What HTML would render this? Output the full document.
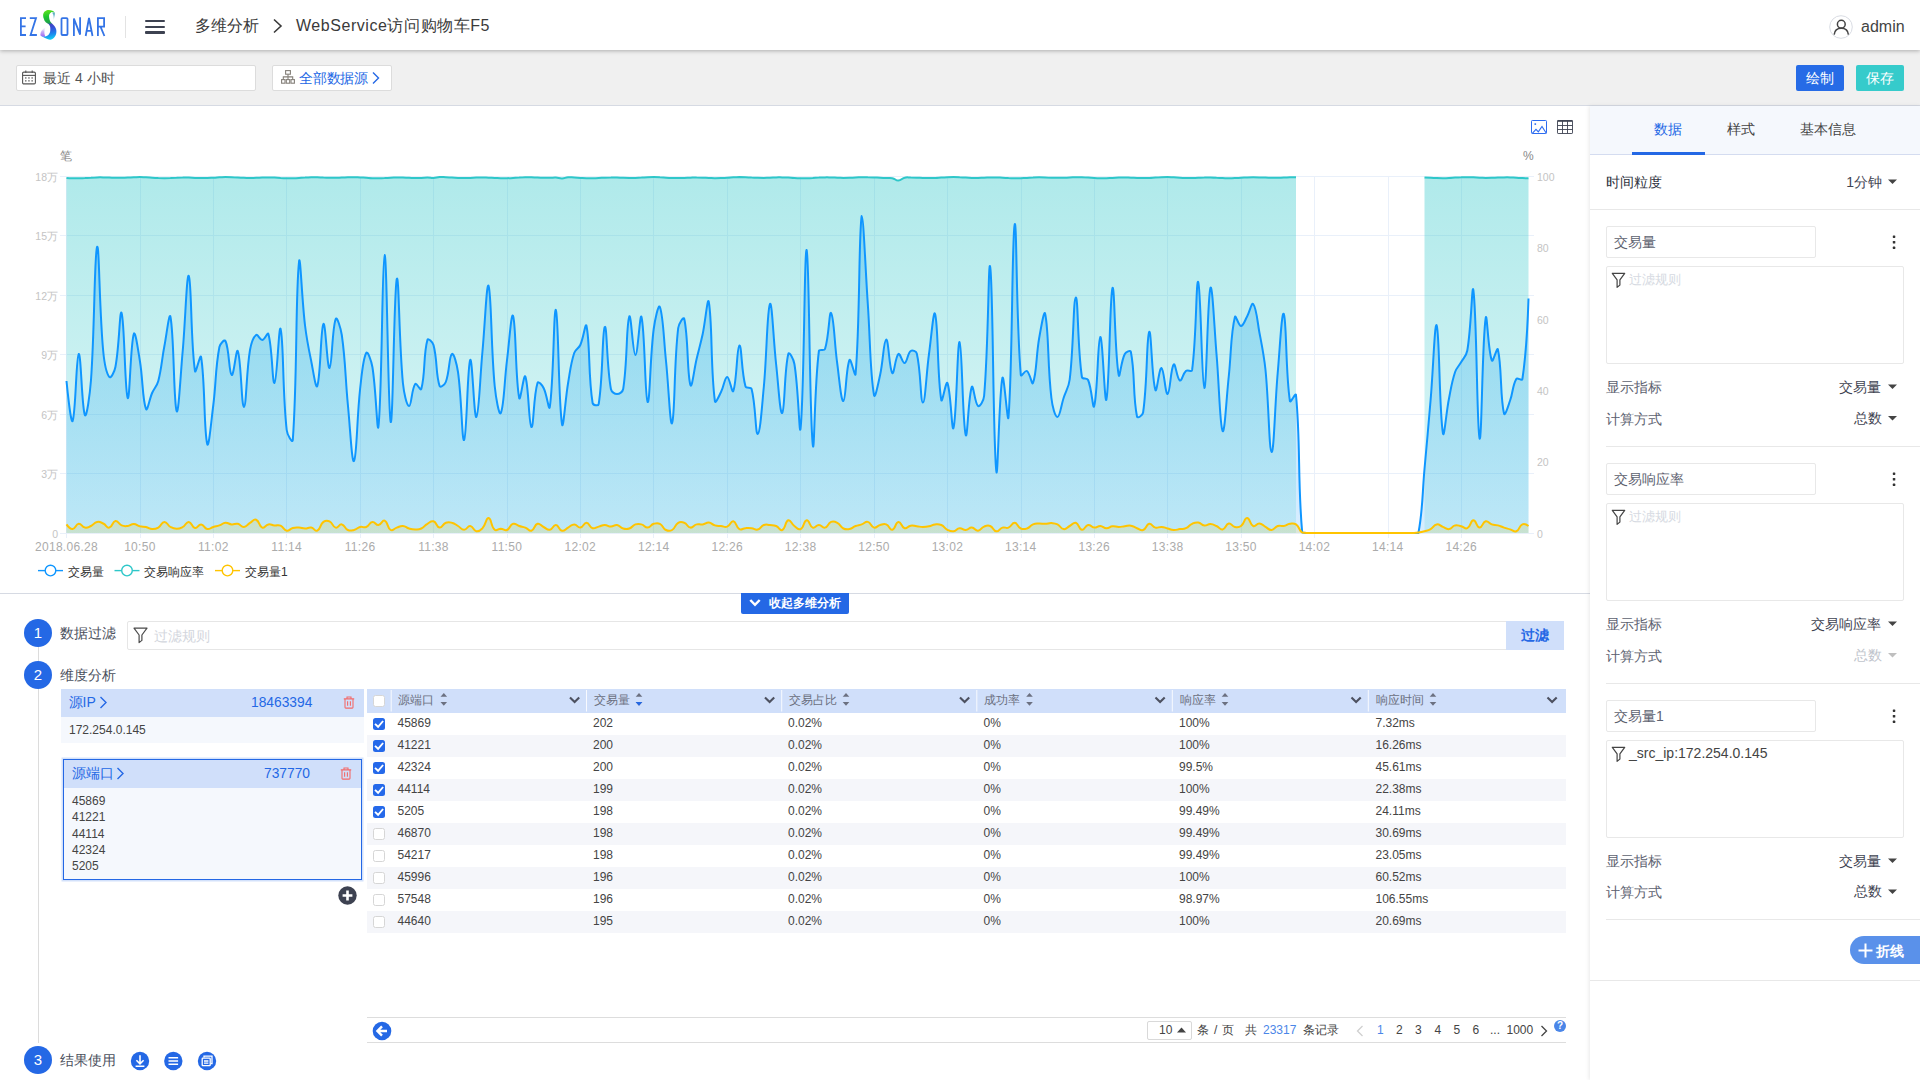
<!DOCTYPE html>
<html lang="zh">
<head>
<meta charset="utf-8">
<title>多维分析</title>
<style>
*{box-sizing:border-box;margin:0;padding:0}
html,body{width:1920px;height:1080px;overflow:hidden;background:#fff}
body{font-family:"Liberation Sans",sans-serif;font-size:14px;color:#444;position:relative}
.abs{position:absolute}
/* header */
#hdr{position:absolute;left:0;top:0;width:1920px;height:50px;background:#fff;box-shadow:0 1px 4px rgba(0,0,0,.28);z-index:5}
#tool{position:absolute;left:0;top:50px;width:1920px;height:56px;background:#f0f0f0;border-bottom:1px solid #d6dae3}
.crumb{position:absolute;top:15px;font-size:16px;line-height:22px;color:#3a3a3a;white-space:nowrap}
.inp{position:absolute;background:#fff;border:1px solid #dcdcdc;border-radius:2px}
.btn{position:absolute;top:65px;height:26px;width:48px;border-radius:2px;color:#fff;font-size:14px;line-height:26px;text-align:center}
/* chart */
#chart{position:absolute;left:0;top:106px;width:1590px;height:488px;background:#fff;border-bottom:1px solid #d6dae3}
.yl{position:absolute;left:0;width:58px;text-align:right;font-size:10.5px;line-height:14px;color:#c4c4c4}
.yr{position:absolute;left:1537px;font-size:10.5px;line-height:14px;color:#c4c4c4}
.xl{position:absolute;top:540px;width:80px;text-align:center;font-size:12px;line-height:14px;color:#ababab;letter-spacing:.3px}
.lg{position:absolute;top:564.6px;font-size:12px;line-height:14px;color:#333;white-space:nowrap}
</style>
</head>
<body>

<!-- ================= HEADER ================= -->
<div id="hdr">
  <svg class="abs" style="left:0;top:0" width="130" height="50" viewBox="0 0 130 50">
    <defs>
      <linearGradient id="lgS" gradientUnits="userSpaceOnUse" x1="46" y1="10" x2="52" y2="40"><stop offset="0" stop-color="#62e41c"/><stop offset=".22" stop-color="#1cc62e"/><stop offset=".42" stop-color="#1ea24a"/><stop offset=".5" stop-color="#3f44c6"/><stop offset=".62" stop-color="#3352d8"/><stop offset=".8" stop-color="#1c86ee"/><stop offset="1" stop-color="#0fdcf4"/></linearGradient>
      <linearGradient id="lgT" gradientUnits="userSpaceOnUse" x1="0" y1="12" x2="0" y2="20.5"><stop offset="0" stop-color="#2a9cae"/><stop offset="1" stop-color="#7fb6e0" stop-opacity="0"/></linearGradient>
      <linearGradient id="lgP" gradientUnits="userSpaceOnUse" x1="0" y1="37" x2="0" y2="27"><stop offset="0" stop-color="#9a5cf2"/><stop offset=".55" stop-color="#b79af2" stop-opacity=".75"/><stop offset="1" stop-color="#d8ccf8" stop-opacity="0"/></linearGradient>
    </defs>
    <g fill="none" stroke="#3474e6" stroke-width="1.8" stroke-linejoin="miter">
      <path d="M26,18.1H20.9V35H26M20.9,26.3H25.6"/>
      <path d="M29.8,18.1H36L30.6,35H36.9"/>
      <rect x="61.5" y="18.1" width="6" height="16.9" rx="1"/>
      <path d="M73.9,36V18.6L80.1,34.6V17.2"/>
      <path d="M85.7,36L89,18L92.5,36M86.6,30.8H91.6"/>
      <path d="M97.9,36V18.1H104.1V26.6H97.9M100.6,26.8L104.4,36"/>
    </g>
    <path d="M40.3,35.3C40.5,31.5 42.5,28.5 45.8,27C44.2,29.5 43.8,33 45.2,36.4C43.5,37 41.5,36.5 40.3,35.3Z" fill="url(#lgP)"/>
    <path d="M54.7,12.5C55.4,14.5 55,17.5 53.1,20.4C53.5,17 53.4,14.5 52.3,12.4Z" fill="url(#lgT)"/>
    <path d="M43.1,15C43.5,11.5 46.5,10 48.8,10.1C51.5,10.2 53.8,11 54.7,12.5C53.5,11.8 52.2,11.8 51.2,12.3C49.5,13.5 48.8,15 49.1,16.9C49.3,19 49.8,20.7 50.6,21.9C51.8,23.5 53.3,24.6 54.4,25.9C55.6,27.4 56.4,29 56.4,31.25C56.4,33.2 56,34.9 55.1,36.25C54,38 52.5,39.6 50.6,39.7C48.5,39.8 46.5,39 45,38.1C43.2,37.2 41.8,36.5 40.6,35.6C42.3,36.6 43.8,37 45,36.6C46.6,36.2 47.9,35.5 48.75,34.4C49.7,33.2 50.3,31.8 50.3,30C50.4,28.5 50.3,27.3 50,26.25C49.4,24.8 48.3,23.9 46.9,23.1C45.6,22.2 44.6,21 44.1,19.4C43.4,18 43,16.5 43.1,15Z" fill="url(#lgS)"/>
  </svg>
  <div class="abs" style="left:125px;top:16px;width:1px;height:22px;background:#e3e3e3"></div>
  <div class="abs" style="left:145px;top:20px;width:20px;height:2.4px;background:#3d4251;border-radius:1px"></div>
  <div class="abs" style="left:145px;top:25.6px;width:20px;height:2.4px;background:#3d4251;border-radius:1px"></div>
  <div class="abs" style="left:145px;top:31.2px;width:20px;height:2.4px;background:#3d4251;border-radius:1px"></div>
  <div class="crumb" style="left:195px">多维分析</div>
  <svg class="abs" style="left:272px;top:18px" width="12" height="16" viewBox="0 0 12 16"><path d="M2,1.5L9,8L2,14.5" fill="none" stroke="#3a3a3a" stroke-width="1.6"/></svg>
  <div class="crumb" id="crumb2" style="left:296px;letter-spacing:.55px">WebService访问购物车F5</div>
  <svg class="abs" style="left:1829px;top:15px" width="24" height="24" viewBox="0 0 24 24"><circle cx="12" cy="12" r="11.3" fill="#fff" stroke="#d9dce3" stroke-width="1"/><circle cx="12.3" cy="9.2" r="3.9" fill="none" stroke="#444" stroke-width="1.5"/><path d="M5.2,19.6C5.6,15.3 8.5,13.3 12.3,13.3C16.1,13.3 19,15.3 19.4,19.6" fill="none" stroke="#444" stroke-width="1.5"/></svg>
  <div class="abs" style="left:1861px;top:16px;font-size:16px;line-height:22px;color:#444">admin</div>
</div>

<!-- ================= TOOLBAR ================= -->
<div id="tool"></div>
<div class="inp" style="left:16px;top:65px;width:240px;height:26px"></div>
<svg class="abs" style="left:22px;top:70px" width="14" height="15" viewBox="0 0 14 15"><rect x=".6" y="2.1" width="12.8" height="11.8" rx="1.2" fill="none" stroke="#555" stroke-width="1.1"/><path d="M.6,5.4H13.4" stroke="#555" stroke-width="1.1"/><path d="M3.8,.6V3M10.2,.6V3" stroke="#555" stroke-width="1.1"/><g fill="#666"><rect x="3" y="7.3" width="1.5" height="1.3"/><rect x="6.2" y="7.3" width="1.5" height="1.3"/><rect x="9.4" y="7.3" width="1.5" height="1.3"/><rect x="3" y="10.2" width="1.5" height="1.3"/><rect x="6.2" y="10.2" width="1.5" height="1.3"/><rect x="9.4" y="10.2" width="1.5" height="1.3"/></g></svg>
<div class="abs" style="left:43px;top:68px;font-size:14px;line-height:20px;color:#555">最近 4 小时</div>
<div class="inp" style="left:272px;top:65px;width:120px;height:26px"></div>
<svg class="abs" style="left:281px;top:70px" width="14" height="14" viewBox="0 0 14 14"><g fill="none" stroke="#85807a" stroke-width="1.1"><rect x="4.6" y=".6" width="4.8" height="3.6"/><rect x=".6" y="9.6" width="3.4" height="3.6"/><rect x="5.3" y="9.6" width="3.4" height="3.6"/><rect x="10" y="9.6" width="3.4" height="3.6"/><path d="M7,4.2V9.6M2.3,9.6V6.9H11.7V9.6"/></g></svg>
<div class="abs" style="left:299px;top:68px;font-size:14px;line-height:20px;color:#2468e5;letter-spacing:-.2px">全部数据源</div>
<svg class="abs" style="left:371px;top:71px" width="10" height="14" viewBox="0 0 10 14"><path d="M2,1.5L7.5,7L2,12.5" fill="none" stroke="#2468e5" stroke-width="1.4"/></svg>
<div class="btn" style="left:1796px;background:#266be6">绘制</div>
<div class="btn" style="left:1856px;background:#36cbcb">保存</div>

<!-- ================= CHART ================= -->
<div id="chart"></div>
<svg class="abs" style="left:0;top:0" width="1590" height="594" viewBox="0 0 1590 594">
  <defs>
    <linearGradient id="gB" gradientUnits="userSpaceOnUse" x1="0" y1="216" x2="0" y2="533"><stop offset="0" stop-color="#1296ff" stop-opacity=".31"/><stop offset="1" stop-color="#1296ff" stop-opacity=".17"/></linearGradient>
    <linearGradient id="gC" gradientUnits="userSpaceOnUse" x1="0" y1="177" x2="0" y2="533"><stop offset="0" stop-color="#2ec7c9" stop-opacity=".38"/><stop offset="1" stop-color="#2ec7c9" stop-opacity=".15"/></linearGradient>
    <linearGradient id="gY" gradientUnits="userSpaceOnUse" x1="0" y1="518" x2="0" y2="533"><stop offset="0" stop-color="#ffc400" stop-opacity=".2"/><stop offset="1" stop-color="#ffc400" stop-opacity=".15"/></linearGradient>
  </defs>
  <rect x="60" y="176" width="1474" height="1" fill="#e9f0fa"/><rect x="60" y="235" width="1474" height="1" fill="#e9f0fa"/><rect x="60" y="295" width="1474" height="1" fill="#e9f0fa"/><rect x="60" y="354" width="1474" height="1" fill="#e9f0fa"/><rect x="60" y="414" width="1474" height="1" fill="#e9f0fa"/><rect x="60" y="473" width="1474" height="1" fill="#e9f0fa"/><rect x="60" y="533" width="1474" height="1" fill="#e9f0fa"/><rect x="66" y="176" width="1" height="362" fill="#e9f0fa"/><rect x="140" y="176" width="1" height="362" fill="#e9f0fa"/><rect x="213" y="176" width="1" height="362" fill="#e9f0fa"/><rect x="286" y="176" width="1" height="362" fill="#e9f0fa"/><rect x="360" y="176" width="1" height="362" fill="#e9f0fa"/><rect x="433" y="176" width="1" height="362" fill="#e9f0fa"/><rect x="507" y="176" width="1" height="362" fill="#e9f0fa"/><rect x="580" y="176" width="1" height="362" fill="#e9f0fa"/><rect x="653" y="176" width="1" height="362" fill="#e9f0fa"/><rect x="727" y="176" width="1" height="362" fill="#e9f0fa"/><rect x="800" y="176" width="1" height="362" fill="#e9f0fa"/><rect x="874" y="176" width="1" height="362" fill="#e9f0fa"/><rect x="947" y="176" width="1" height="362" fill="#e9f0fa"/><rect x="1021" y="176" width="1" height="362" fill="#e9f0fa"/><rect x="1094" y="176" width="1" height="362" fill="#e9f0fa"/><rect x="1167" y="176" width="1" height="362" fill="#e9f0fa"/><rect x="1241" y="176" width="1" height="362" fill="#e9f0fa"/><rect x="1314" y="176" width="1" height="362" fill="#e9f0fa"/><rect x="1388" y="176" width="1" height="362" fill="#e9f0fa"/><rect x="1461" y="176" width="1" height="362" fill="#e9f0fa"/>
  <path d="M66.5,381.0C66.5,381.0 70.8,425.1 72.6,421.0C75.7,414.3 76.2,355.3 78.7,354.0C81.1,352.9 81.8,408.4 84.9,415.0C86.6,418.8 89.9,394.2 91.0,380.0C94.8,327.0 94.3,253.5 97.1,247.0C99.2,241.9 99.3,309.6 103.2,351.0C104.2,361.6 105.9,372.6 109.3,377.0C110.8,379.0 114.6,371.5 115.4,367.0C119.5,345.9 119.6,308.2 121.6,313.0C124.5,320.6 124.9,393.2 127.7,398.0C129.8,401.6 130.4,344.3 133.8,334.0C135.3,329.5 138.1,350.1 139.9,361.0C143.0,380.1 142.4,399.5 146.0,409.0C147.3,412.3 149.4,399.3 152.1,393.0C154.3,388.1 156.9,386.2 158.3,381.0C161.8,367.4 161.7,360.0 164.4,346.0C166.6,334.4 169.3,310.8 170.5,317.0C174.2,336.8 173.6,402.7 176.6,411.0C178.5,416.3 180.5,375.0 182.7,351.0C185.4,321.0 186.7,272.5 188.8,276.0C191.6,280.5 190.7,343.1 195.0,371.0C195.6,375.5 200.3,352.6 201.1,357.0C205.2,381.8 203.8,430.8 207.2,444.0C208.7,450.0 211.3,420.7 213.3,405.0C216.2,381.9 215.2,369.3 219.4,347.0C220.1,343.7 224.6,338.8 225.5,341.0C229.5,350.0 228.8,372.7 231.7,375.0C233.7,376.7 236.3,347.1 237.8,351.0C241.2,359.9 241.5,407.2 243.9,407.0C246.4,406.8 246.2,372.5 250.0,350.0C251.1,343.7 252.8,337.7 256.1,335.0C257.7,333.7 259.9,340.2 262.2,340.0C264.8,339.8 267.6,331.5 268.4,334.0C272.5,348.7 272.2,384.0 274.5,383.0C277.0,382.0 278.9,322.4 280.6,329.0C283.8,341.2 282.3,390.2 286.7,430.0C287.2,434.6 292.5,444.1 292.8,440.0C297.4,376.9 295.4,295.5 299.0,262.0C300.2,249.9 301.9,300.5 305.1,326.0C306.8,340.1 308.3,347.1 311.2,361.0C313.2,371.1 315.9,390.3 317.3,386.0C320.8,375.5 320.6,328.2 323.4,324.0C325.5,321.0 327.2,368.9 329.5,368.0C332.1,366.9 332.0,328.8 335.7,319.0C336.9,315.6 340.8,328.3 341.8,335.0C345.7,362.7 345.2,377.0 347.9,405.0C350.1,427.4 351.9,463.8 354.0,461.0C356.8,457.4 356.9,417.7 360.1,389.0C361.8,374.5 362.8,359.2 366.2,353.0C367.7,350.4 371.4,361.0 372.4,367.0C376.2,390.2 377.2,437.5 378.5,426.0C382.1,392.7 382.1,255.8 384.6,255.0C387.0,254.2 388.1,416.8 390.7,422.0C393.0,426.4 394.0,288.0 396.8,279.0C398.9,272.4 399.0,341.6 402.9,383.0C403.9,392.4 406.6,405.8 409.1,406.0C411.5,406.2 411.5,389.1 415.2,384.0C416.4,382.3 420.6,391.4 421.3,389.0C425.5,373.8 423.2,355.2 427.4,340.0C428.1,337.6 432.7,342.1 433.5,345.0C437.6,360.5 435.5,373.4 439.6,386.0C440.4,388.2 444.8,384.6 445.8,382.0C449.7,371.8 448.9,356.4 451.9,354.0C453.8,352.4 456.9,364.5 458.0,372.0C461.8,398.9 461.9,442.2 464.1,440.0C466.8,437.4 467.4,365.4 470.2,360.0C472.3,356.2 474.1,418.7 476.3,417.0C479.0,415.1 480.0,377.4 482.5,351.0C484.9,325.0 486.7,280.5 488.6,286.0C491.5,294.5 490.9,346.2 494.7,386.0C495.8,397.0 499.1,416.5 500.8,413.0C504.0,406.5 504.3,381.8 506.9,361.0C509.2,343.0 511.3,310.7 513.1,316.0C516.2,325.5 515.3,379.0 519.2,398.0C520.2,403.2 523.8,373.0 525.3,376.5C528.7,384.6 528.8,425.6 531.4,427.0C533.7,428.2 533.4,396.2 537.5,383.0C538.3,380.6 542.3,385.3 543.6,388.0C547.1,394.9 548.9,412.3 549.8,407.0C553.8,381.1 553.6,306.9 555.9,310.0C558.5,313.7 558.4,402.6 562.0,424.0C563.3,431.8 565.3,399.3 568.1,383.0C570.2,370.9 570.5,364.4 574.2,353.0C575.4,349.2 578.7,348.6 580.3,345.0C583.6,337.8 585.5,321.2 586.5,326.0C590.3,344.4 588.0,374.1 592.6,403.0C592.9,405.3 598.3,406.3 598.7,404.0C603.2,375.9 602.1,330.3 604.8,327.0C607.0,324.3 606.6,365.2 610.9,389.0C611.5,392.0 614.6,394.0 617.0,394.0C619.5,394.0 622.7,392.0 623.2,389.0C627.6,361.0 626.1,325.4 629.3,316.5C631.0,311.8 632.9,354.9 635.4,355.0C637.8,355.1 640.0,311.2 641.5,317.0C644.9,330.0 645.0,399.4 647.6,402.0C649.9,404.2 650.0,358.0 653.7,329.0C654.9,320.0 658.4,303.2 659.9,307.0C663.3,316.0 663.7,339.4 666.0,361.0C668.6,385.8 670.2,428.2 672.1,423.0C675.1,415.0 673.8,365.3 678.2,328.0C678.7,323.7 683.6,315.8 684.3,319.0C688.5,338.6 687.0,373.6 690.4,385.0C691.9,389.6 694.1,369.4 696.6,359.0C699.0,349.0 700.5,344.1 702.7,334.0C705.4,321.3 707.6,295.4 708.8,302.0C712.5,322.2 710.5,368.6 714.9,401.0C715.4,404.6 719.1,395.9 721.0,392.0C724.0,386.3 724.6,377.2 727.2,377.0C729.5,376.8 732.0,394.1 733.3,391.0C736.9,381.5 736.8,346.4 739.4,345.5C741.7,344.6 741.3,371.5 745.5,386.5C746.2,388.9 751.0,386.6 751.6,389.0C755.9,405.6 755.4,434.6 757.7,434.0C760.3,433.4 762.0,405.3 763.9,386.0C766.9,353.3 767.1,309.1 770.0,304.0C772.0,300.3 773.4,340.0 776.1,364.0C778.3,383.6 780.0,414.8 782.2,413.0C784.9,410.8 784.2,370.4 788.3,354.0C789.1,350.8 793.7,359.4 794.4,364.0C798.6,389.0 799.3,440.1 800.6,428.0C804.2,394.5 804.3,246.8 806.7,250.0C809.2,253.6 809.5,417.8 812.8,445.0C814.4,458.2 814.3,386.9 818.9,351.0C819.2,348.5 824.3,351.3 825.0,349.0C829.2,336.1 829.1,310.5 831.1,313.0C834.0,316.5 834.4,343.7 837.3,364.0C839.3,378.9 841.1,401.8 843.4,401.0C845.9,400.2 845.9,367.9 849.5,360.0C850.8,357.1 855.2,379.1 855.6,374.0C860.1,321.5 858.6,234.0 861.7,216.0C863.5,216.0 865.4,268.8 867.8,304.0C870.3,340.4 870.0,371.9 874.0,395.0C874.9,400.3 878.3,383.2 880.1,375.0C883.2,361.0 883.7,339.9 886.2,339.5C888.6,339.1 889.2,369.3 892.3,373.0C894.1,375.1 895.3,356.6 898.4,354.0C900.2,352.6 902.4,363.5 904.6,363.0C907.3,362.3 907.4,353.5 910.7,351.0C912.3,349.7 916.2,351.1 916.8,353.5C921.1,371.7 920.4,402.4 922.9,402.5C925.3,402.6 926.3,373.4 929.0,354.0C931.2,338.0 933.6,308.1 935.1,314.0C938.5,326.5 937.2,377.2 941.3,400.0C942.1,404.8 946.0,379.8 947.4,383.0C950.9,391.0 951.8,433.7 953.5,428.0C956.7,417.3 957.3,340.7 959.6,342.0C962.1,343.5 962.5,423.2 965.7,435.0C967.4,441.2 968.4,395.2 971.8,387.0C973.3,383.6 974.9,403.7 978.0,406.0C979.8,407.3 983.7,400.6 984.1,396.0C988.6,345.0 988.3,255.4 990.2,267.0C993.2,285.4 992.9,440.5 996.3,471.0C997.8,484.9 999.0,393.2 1002.4,378.0C1003.9,371.6 1007.7,427.4 1008.5,417.0C1012.6,366.0 1011.9,233.9 1014.7,224.5C1016.8,217.1 1016.1,319.1 1020.8,375.0C1021.0,377.7 1025.2,369.9 1026.9,371.0C1030.1,373.1 1031.9,386.0 1033.0,383.0C1036.8,373.0 1036.0,356.2 1039.1,338.5C1040.9,328.6 1044.1,308.5 1045.2,314.0C1049.0,332.3 1047.4,364.7 1051.4,398.0C1052.3,405.9 1055.0,417.0 1057.5,417.0C1059.9,417.0 1061.1,405.6 1063.6,398.0C1066.0,390.6 1068.8,387.2 1069.7,379.5C1073.7,347.0 1073.3,298.0 1075.8,297.5C1078.2,297.0 1077.4,346.6 1081.9,377.0C1082.3,379.6 1087.1,377.6 1088.1,380.0C1092.0,389.2 1092.8,410.8 1094.2,406.0C1097.7,393.6 1097.7,338.4 1100.3,337.0C1102.6,335.8 1104.7,406.6 1106.4,399.5C1109.5,387.0 1109.8,293.5 1112.5,288.0C1114.7,283.7 1114.7,353.9 1118.7,375.0C1119.6,380.3 1121.0,361.1 1124.8,354.0C1125.9,351.9 1130.4,349.7 1130.9,352.0C1135.3,374.7 1132.6,394.8 1137.0,416.5C1137.5,419.0 1142.7,415.3 1143.1,412.5C1147.6,381.5 1146.4,337.2 1149.2,332.0C1151.3,328.2 1151.8,379.7 1155.4,390.0C1156.7,394.1 1159.2,367.3 1161.5,368.0C1164.1,368.9 1165.3,394.7 1167.6,394.0C1170.2,393.3 1170.6,367.9 1173.7,364.5C1175.5,362.5 1176.9,378.9 1179.8,380.5C1181.8,381.5 1182.8,373.7 1185.9,371.0C1187.7,369.5 1191.7,372.3 1192.1,370.0C1196.6,336.7 1196.0,278.7 1198.2,282.0C1200.8,285.9 1201.8,386.8 1204.3,388.0C1206.7,389.2 1207.5,296.2 1210.4,288.0C1212.4,282.6 1214.3,327.6 1216.5,354.0C1219.2,384.8 1219.8,425.9 1222.6,431.0C1224.7,434.7 1226.4,398.0 1228.8,376.0C1231.3,352.4 1230.7,333.9 1234.9,317.0C1235.6,313.9 1238.6,326.1 1241.0,326.0C1243.5,325.9 1244.9,320.4 1247.1,316.5C1249.8,311.6 1251.6,302.0 1253.2,304.0C1256.5,308.2 1257.3,320.7 1259.3,332.0C1262.2,347.1 1263.9,354.7 1265.5,370.0C1268.8,402.7 1269.1,451.4 1271.6,452.0C1274.0,452.6 1274.9,404.6 1277.7,373.0C1279.8,349.4 1281.8,309.5 1283.8,314.0C1286.7,320.7 1285.5,371.5 1289.9,401.0C1290.4,403.9 1295.8,391.9 1296.0,395.0C1300.7,444.5 1297.5,479.7 1302.2,532.5C1302.4,533.0 1305.8,532.9 1308.3,533.0C1310.7,533.0 1312.0,533.0 1314.4,533.0C1316.8,533.0 1318.1,533.0 1320.5,533.0C1323.0,533.0 1324.2,533.0 1326.6,533.0C1329.1,533.0 1330.3,533.0 1332.8,533.0C1335.2,533.0 1336.4,533.0 1338.9,533.0C1341.3,533.0 1342.5,533.0 1345.0,533.0C1347.4,533.0 1348.7,533.0 1351.1,533.0C1353.5,533.0 1354.8,533.0 1357.2,533.0C1359.7,533.0 1360.9,533.0 1363.3,533.0C1365.8,533.0 1367.0,533.0 1369.5,533.0C1371.9,533.0 1373.1,533.0 1375.6,533.0C1378.0,533.0 1379.2,533.0 1381.7,533.0C1384.1,533.0 1385.4,533.0 1387.8,533.0C1390.3,533.0 1391.5,533.0 1393.9,533.0C1396.4,533.0 1397.6,533.0 1400.0,533.0C1402.5,533.0 1403.7,533.0 1406.2,533.0C1408.6,533.0 1409.8,533.0 1412.3,533.0C1414.7,533.0 1418.0,533.0 1418.4,533.0C1422.9,509.6 1422.2,494.6 1424.5,469.0C1427.0,441.4 1428.3,427.6 1430.6,400.0C1433.2,370.2 1434.7,320.1 1436.7,325.5C1439.6,333.3 1439.2,411.0 1442.9,433.0C1444.1,440.2 1446.2,412.2 1449.0,398.5C1451.1,387.8 1451.7,382.2 1455.1,372.0C1456.6,367.6 1458.9,366.1 1461.2,362.0C1463.8,357.5 1466.5,355.6 1467.3,350.5C1471.4,327.0 1472.0,280.3 1473.4,290.5C1476.9,315.5 1476.9,432.4 1479.6,438.5C1481.8,443.4 1482.1,341.0 1485.7,318.0C1487.0,309.8 1488.0,350.8 1491.8,360.5C1492.9,363.4 1497.1,346.0 1497.9,349.5C1502.0,367.2 1500.0,396.8 1504.0,413.5C1504.9,417.2 1508.2,405.9 1510.1,400.5C1513.1,392.1 1512.4,385.8 1516.3,379.0C1517.3,377.2 1522.0,381.3 1522.4,379.0C1526.9,349.1 1528.5,298.5 1528.5,298.5L1528.5,533.0 L66.5,533.0 Z" fill="url(#gB)"/>
  <path d="M66.5,177.9C66.5,177.9 69.6,178.1 72.6,178.2C75.7,178.3 75.7,178.3 78.7,178.3C81.8,178.3 81.8,178.2 84.9,178.1C87.9,177.9 87.9,177.8 91.0,177.7C94.0,177.5 94.0,177.5 97.1,177.4C100.1,177.3 100.1,177.3 103.2,177.4C106.3,177.4 106.3,177.5 109.3,177.6C112.4,177.7 112.4,177.8 115.4,177.8C118.5,177.9 118.5,177.9 121.6,177.8C124.6,177.8 124.6,177.8 127.7,177.6C130.7,177.5 130.7,177.4 133.8,177.3C136.8,177.2 136.8,177.1 139.9,177.1C143.0,177.1 143.0,177.2 146.0,177.3C149.1,177.4 149.1,177.5 152.1,177.7C155.2,177.9 155.2,177.9 158.3,178.1C161.3,178.2 161.3,178.2 164.4,178.2C167.4,178.2 167.4,178.2 170.5,178.1C173.6,177.9 173.5,177.9 176.6,177.8C179.7,177.6 179.7,177.6 182.7,177.6C185.8,177.5 185.8,177.5 188.8,177.6C191.9,177.7 191.9,177.8 195.0,177.9C198.0,178.0 198.0,178.0 201.1,178.1C204.1,178.1 204.1,178.1 207.2,178.0C210.3,178.0 210.3,177.9 213.3,177.7C216.4,177.6 216.4,177.5 219.4,177.3C222.5,177.2 222.5,177.1 225.5,177.1C228.6,177.1 228.6,177.1 231.7,177.2C234.7,177.3 234.7,177.3 237.8,177.5C240.8,177.7 240.8,177.7 243.9,177.8C247.0,177.9 247.0,178.0 250.0,178.0C253.1,178.0 253.1,177.9 256.1,177.8C259.2,177.7 259.2,177.7 262.2,177.6C265.3,177.5 265.3,177.5 268.4,177.5C271.4,177.5 271.4,177.5 274.5,177.6C277.5,177.8 277.5,177.8 280.6,178.0C283.7,178.1 283.7,178.2 286.7,178.3C289.8,178.3 289.8,178.3 292.8,178.3C295.9,178.2 295.9,178.2 299.0,178.0C302.0,177.8 302.0,177.7 305.1,177.6C308.1,177.4 308.1,177.4 311.2,177.3C314.2,177.2 314.2,177.3 317.3,177.3C320.4,177.4 320.4,177.4 323.4,177.6C326.5,177.7 326.5,177.7 329.5,177.8C332.6,177.9 332.6,177.9 335.7,177.8C338.7,177.8 338.7,177.7 341.8,177.6C344.8,177.5 344.8,177.4 347.9,177.3C350.9,177.2 350.9,177.2 354.0,177.2C357.1,177.2 357.1,177.3 360.1,177.4C363.2,177.6 363.2,177.6 366.2,177.8C369.3,178.0 369.3,178.1 372.4,178.2C375.4,178.3 375.4,178.3 378.5,178.3C381.5,178.2 381.5,178.2 384.6,178.1C387.7,177.9 387.6,177.9 390.7,177.7C393.8,177.6 393.8,177.6 396.8,177.5C399.9,177.5 399.9,177.5 402.9,177.6C406.0,177.7 406.0,177.7 409.1,177.8C412.1,177.9 412.1,178.0 415.2,178.0C418.2,178.0 418.2,178.0 421.3,177.9C424.4,177.9 424.4,177.6 427.4,177.6C430.5,177.6 430.5,178.1 433.5,178.0C436.6,177.8 436.6,177.3 439.6,177.1C442.7,176.9 442.7,177.1 445.8,177.2C448.8,177.3 448.8,177.4 451.9,177.6C454.9,177.8 454.9,177.8 458.0,177.9C461.1,178.0 461.1,178.0 464.1,178.0C467.2,178.0 467.2,178.0 470.2,177.9C473.3,177.8 473.3,177.7 476.3,177.6C479.4,177.5 479.4,177.5 482.5,177.5C485.5,177.5 485.5,177.6 488.6,177.7C491.6,177.8 491.6,177.9 494.7,178.0C497.8,178.1 497.8,178.2 500.8,178.2C503.9,178.3 503.9,178.3 506.9,178.2C510.0,178.1 510.0,178.1 513.1,177.9C516.1,177.7 516.1,177.6 519.2,177.5C522.2,177.3 522.2,177.3 525.3,177.2C528.3,177.2 528.3,177.2 531.4,177.3C534.5,177.4 534.5,177.4 537.5,177.5C540.6,177.7 540.6,177.7 543.6,177.8C546.7,177.9 546.7,177.9 549.8,177.8C552.8,177.8 552.8,177.5 555.9,177.6C558.9,177.8 558.9,178.5 562.0,178.5C565.1,178.4 565.0,177.5 568.1,177.3C571.1,177.1 571.2,177.4 574.2,177.5C577.3,177.7 577.3,177.7 580.3,177.9C583.4,178.1 583.4,178.2 586.5,178.2C589.5,178.3 589.5,178.3 592.6,178.3C595.6,178.2 595.6,178.2 598.7,178.0C601.8,177.9 601.7,177.8 604.8,177.7C607.9,177.5 607.9,177.5 610.9,177.5C614.0,177.4 614.0,177.4 617.0,177.5C620.1,177.6 620.1,177.7 623.2,177.8C626.2,177.9 626.2,177.9 629.3,177.9C632.3,178.0 632.3,178.0 635.4,177.9C638.5,177.8 638.5,177.7 641.5,177.6C644.6,177.4 644.6,177.3 647.6,177.2C650.7,177.1 650.7,177.1 653.7,177.1C656.8,177.1 656.8,177.1 659.9,177.3C662.9,177.4 662.9,177.5 666.0,177.7C669.0,177.9 669.0,177.9 672.1,178.0C675.2,178.1 675.2,178.1 678.2,178.1C681.3,178.1 681.3,178.0 684.3,177.9C687.4,177.8 687.4,177.8 690.4,177.7C693.5,177.6 693.5,177.5 696.6,177.6C699.6,177.6 699.6,177.6 702.7,177.7C705.7,177.8 705.7,177.9 708.8,178.0C711.9,178.1 711.9,178.2 714.9,178.2C718.0,178.2 718.0,178.2 721.0,178.1C724.1,178.0 724.1,177.9 727.2,177.7C730.2,177.6 730.2,177.5 733.3,177.3C736.3,177.2 736.3,177.2 739.4,177.1C742.4,177.1 742.4,177.1 745.5,177.2C748.6,177.4 748.6,177.4 751.6,177.6C754.7,177.7 754.7,177.8 757.7,177.8C760.8,177.9 760.8,177.9 763.9,177.9C766.9,177.8 766.9,177.8 770.0,177.7C773.0,177.6 773.0,177.5 776.1,177.4C779.1,177.4 779.1,177.3 782.2,177.4C785.3,177.4 785.3,177.5 788.3,177.6C791.4,177.8 791.4,177.9 794.4,178.0C797.5,178.2 797.5,178.2 800.6,178.3C803.6,178.4 803.6,178.3 806.7,178.3C809.7,178.2 809.7,178.1 812.8,178.0C815.9,177.8 815.8,177.7 818.9,177.6C822.0,177.4 822.0,177.4 825.0,177.4C828.1,177.3 828.1,177.4 831.1,177.5C834.2,177.5 834.2,177.6 837.3,177.7C840.3,177.8 840.3,177.8 843.4,177.9C846.4,177.9 846.4,177.9 849.5,177.8C852.6,177.7 852.6,177.7 855.6,177.5C858.7,177.4 858.7,177.3 861.7,177.2C864.8,177.1 864.8,177.1 867.8,177.2C870.9,177.2 870.9,177.2 874.0,177.4C877.0,177.6 877.0,177.6 880.1,177.8C883.1,178.0 883.1,178.0 886.2,178.1C889.3,178.2 889.4,177.6 892.3,178.2C895.5,178.8 895.4,180.7 898.4,180.6C901.5,180.5 901.3,178.5 904.6,177.7C907.5,176.9 907.6,177.5 910.7,177.6C913.7,177.6 913.7,177.6 916.8,177.7C919.8,177.8 919.8,177.9 922.9,178.0C926.0,178.1 926.0,178.1 929.0,178.1C932.1,178.1 932.1,178.1 935.1,178.0C938.2,177.9 938.2,177.8 941.3,177.6C944.3,177.4 944.3,177.4 947.4,177.2C950.4,177.1 950.4,177.1 953.5,177.1C956.5,177.1 956.5,177.1 959.6,177.3C962.7,177.4 962.7,177.5 965.7,177.6C968.8,177.8 968.8,177.8 971.8,177.9C974.9,178.0 974.9,178.0 978.0,177.9C981.0,177.9 981.0,177.8 984.1,177.7C987.1,177.6 987.1,177.6 990.2,177.5C993.2,177.4 993.3,177.4 996.3,177.5C999.4,177.5 999.4,177.6 1002.4,177.7C1005.5,177.9 1005.5,177.9 1008.5,178.1C1011.6,178.2 1011.6,178.3 1014.7,178.3C1017.7,178.3 1017.7,178.3 1020.8,178.2C1023.8,178.1 1023.8,178.0 1026.9,177.9C1030.0,177.7 1029.9,177.6 1033.0,177.5C1036.1,177.3 1036.1,177.3 1039.1,177.3C1042.2,177.3 1042.2,177.3 1045.2,177.4C1048.3,177.5 1048.3,177.5 1051.4,177.7C1054.4,177.8 1054.4,177.8 1057.5,177.8C1060.5,177.9 1060.5,177.9 1063.6,177.8C1066.7,177.7 1066.7,177.6 1069.7,177.5C1072.8,177.4 1072.8,177.3 1075.8,177.2C1078.9,177.2 1078.9,177.2 1081.9,177.2C1085.0,177.3 1085.0,177.3 1088.1,177.5C1091.1,177.7 1091.1,177.7 1094.2,177.9C1097.2,178.1 1097.2,178.1 1100.3,178.2C1103.4,178.3 1103.4,178.3 1106.4,178.2C1109.5,178.1 1109.5,178.1 1112.5,178.0C1115.6,177.8 1115.6,177.8 1118.7,177.6C1121.7,177.5 1121.7,177.5 1124.8,177.5C1127.8,177.5 1127.8,177.6 1130.9,177.7C1133.9,177.8 1133.9,177.8 1137.0,177.9C1140.1,178.0 1140.1,178.0 1143.1,178.0C1146.2,178.0 1146.2,178.0 1149.2,177.9C1152.3,177.8 1152.3,177.7 1155.4,177.5C1158.4,177.3 1158.4,177.3 1161.5,177.2C1164.5,177.1 1164.5,177.1 1167.6,177.1C1170.6,177.1 1170.6,177.2 1173.7,177.3C1176.8,177.5 1176.8,177.5 1179.8,177.7C1182.9,177.9 1182.9,177.9 1185.9,178.0C1189.0,178.0 1189.0,178.0 1192.1,178.0C1195.1,177.9 1195.1,177.9 1198.2,177.8C1201.2,177.7 1201.2,177.6 1204.3,177.6C1207.3,177.5 1207.4,177.5 1210.4,177.5C1213.5,177.6 1213.5,177.6 1216.5,177.8C1219.6,177.9 1219.6,178.0 1222.6,178.1C1225.7,178.2 1225.7,178.3 1228.8,178.3C1231.8,178.3 1231.8,178.3 1234.9,178.1C1237.9,178.0 1237.9,177.9 1241.0,177.7C1244.1,177.6 1244.0,177.5 1247.1,177.4C1250.2,177.2 1250.2,177.2 1253.2,177.2C1256.3,177.2 1256.3,177.2 1259.3,177.4C1262.4,177.5 1262.4,177.5 1265.5,177.6C1268.5,177.8 1268.5,177.8 1271.6,177.8C1274.6,177.9 1274.6,177.9 1277.7,177.8C1280.8,177.7 1280.8,177.6 1283.8,177.5C1286.9,177.4 1286.9,177.4 1289.9,177.3C1293.0,177.3 1296.0,177.3 1296.0,177.3L1296.0,533.0 L66.5,533.0 Z" fill="url(#gC)"/>
  <path d="M1424.5,177.6C1424.5,177.6 1427.6,177.7 1430.6,177.8C1433.7,177.9 1433.7,178.0 1436.7,178.1C1439.8,178.2 1439.8,178.2 1442.9,178.2C1445.9,178.2 1445.9,178.2 1449.0,178.0C1452.0,177.9 1452.0,177.8 1455.1,177.6C1458.2,177.4 1458.2,177.4 1461.2,177.3C1464.3,177.1 1464.3,177.1 1467.3,177.2C1470.4,177.2 1470.4,177.2 1473.4,177.3C1476.5,177.5 1476.5,177.5 1479.6,177.7C1482.6,177.8 1482.6,177.8 1485.7,177.9C1488.7,177.9 1488.7,177.9 1491.8,177.8C1494.9,177.7 1494.9,177.7 1497.9,177.6C1501.0,177.5 1501.0,177.4 1504.0,177.4C1507.1,177.3 1507.1,177.3 1510.1,177.4C1513.2,177.5 1513.2,177.6 1516.3,177.7C1519.3,177.9 1519.3,178.0 1522.4,178.1C1525.4,178.3 1528.5,178.3 1528.5,178.3L1528.5,533.0 L1424.5,533.0 Z" fill="url(#gC)"/>
  <path d="M66.5,524.4C66.5,524.4 69.6,529.1 72.6,529.0C75.7,528.8 75.5,524.2 78.7,523.8C81.6,523.5 81.6,527.0 84.9,527.6C87.7,528.1 88.1,527.3 91.0,526.0C94.2,524.5 93.8,522.7 97.1,522.0C99.9,521.4 100.4,522.2 103.2,523.5C106.5,525.0 106.6,528.2 109.3,527.6C112.7,526.9 112.1,521.6 115.4,521.0C118.2,520.5 118.2,524.0 121.6,525.4C124.3,526.5 124.7,526.3 127.7,526.0C130.8,525.6 130.8,523.9 133.8,524.0C136.9,524.1 136.8,525.5 139.9,526.3C142.9,527.0 143.0,526.3 146.0,527.0C149.1,527.7 149.0,528.8 152.1,529.0C155.2,529.1 155.6,529.1 158.3,527.6C161.8,525.6 161.2,522.1 164.4,521.9C167.4,521.8 167.1,525.1 170.5,527.0C173.2,528.5 173.6,528.8 176.6,528.8C179.7,528.8 180.0,528.5 182.7,527.0C186.1,525.1 185.9,521.7 188.8,521.9C192.0,522.2 191.6,527.3 195.0,528.0C197.7,528.6 198.1,524.2 201.1,524.4C204.3,524.7 203.9,528.3 207.2,529.0C210.0,529.6 210.2,527.9 213.3,527.0C216.3,526.1 216.4,526.4 219.4,525.4C222.6,524.3 222.4,523.1 225.5,522.8C228.5,522.6 228.6,524.1 231.7,524.4C234.7,524.6 234.9,523.2 237.8,523.8C241.0,524.5 240.9,527.2 243.9,527.0C247.1,526.7 246.8,524.7 250.0,522.8C253.0,521.0 253.6,518.7 256.1,519.7C259.8,521.1 258.6,526.2 262.2,527.6C264.7,528.6 265.1,525.0 268.4,524.4C271.3,523.9 271.4,525.1 274.5,525.4C277.5,525.7 277.9,524.5 280.6,525.7C284.0,527.2 283.4,530.1 286.7,530.7C289.5,531.2 289.6,528.8 292.8,528.0C295.8,527.3 295.9,527.5 299.0,527.6C302.0,527.7 302.0,528.5 305.1,528.5C308.1,528.5 308.3,527.1 311.2,527.6C314.4,528.2 314.9,531.8 317.3,530.7C321.0,529.0 319.5,524.9 323.4,521.9C325.7,520.2 327.0,520.1 329.5,521.3C333.1,523.0 332.2,526.7 335.7,527.6C338.3,528.3 339.0,523.9 341.8,524.4C345.1,525.1 344.4,528.4 347.9,530.0C350.5,531.2 351.1,530.7 354.0,530.0C357.2,529.2 356.9,527.8 360.1,527.0C363.0,526.3 363.6,528.1 366.2,527.0C369.7,525.6 369.1,522.5 372.4,522.0C375.2,521.5 375.6,525.3 378.5,525.0C381.7,524.6 382.1,519.6 384.6,520.6C388.3,522.1 386.9,527.8 390.7,530.0C393.0,531.3 393.7,528.6 396.8,527.6C399.8,526.6 400.0,525.8 402.9,526.0C406.1,526.2 405.9,527.6 409.1,528.5C412.0,529.3 412.1,529.4 415.2,529.4C418.2,529.4 418.6,529.7 421.3,528.5C424.7,526.9 424.1,525.7 427.4,523.8C430.2,522.1 430.9,520.5 433.5,521.3C437.0,522.4 436.4,527.2 439.6,527.6C442.5,528.0 442.3,524.1 445.8,522.8C448.5,521.7 449.0,522.0 451.9,522.8C455.1,523.6 455.0,524.3 458.0,526.0C461.1,527.8 461.1,529.8 464.1,529.8C467.2,529.8 467.4,525.6 470.2,526.0C473.5,526.4 473.0,530.7 476.3,531.3C479.2,531.8 480.2,530.6 482.5,528.2C486.3,524.0 485.7,518.1 488.6,518.1C491.8,518.5 490.5,526.2 494.7,529.8C496.7,531.5 497.8,528.8 500.8,528.8C503.9,528.9 504.4,531.0 506.9,530.0C510.5,528.5 509.5,524.9 513.1,523.8C515.7,522.9 516.1,525.0 519.2,526.0C522.2,526.9 522.4,526.5 525.3,527.6C528.5,528.8 528.8,531.5 531.4,530.7C534.9,529.6 534.0,524.9 537.5,523.8C540.1,523.0 540.5,525.5 543.6,527.0C546.7,528.5 546.9,530.3 549.8,529.8C553.0,529.3 552.9,524.8 555.9,525.0C559.0,525.2 558.6,530.0 562.0,530.7C564.7,531.3 565.1,529.2 568.1,527.6C571.2,526.0 571.2,524.4 574.2,524.4C577.3,524.4 577.5,528.0 580.3,527.6C583.6,527.2 583.5,522.7 586.5,522.8C589.6,523.0 589.1,527.1 592.6,528.2C595.2,529.0 595.6,527.4 598.7,526.6C601.8,525.8 601.8,525.0 604.8,525.0C607.9,525.0 607.9,526.6 610.9,526.6C614.0,526.6 614.2,524.6 617.0,525.0C620.3,525.5 619.9,527.6 623.2,528.5C626.0,529.3 626.5,529.4 629.3,528.5C632.6,527.4 632.1,525.5 635.4,524.4C638.2,523.5 638.6,523.6 641.5,524.4C644.8,525.2 644.6,527.7 647.6,527.6C650.8,527.4 650.4,524.8 653.7,523.8C656.6,522.9 657.3,522.5 659.9,523.8C663.5,525.6 662.4,528.2 666.0,530.0C668.5,531.3 669.7,531.4 672.1,530.0C675.8,527.8 674.5,525.0 678.2,522.8C680.6,521.4 681.6,521.7 684.3,522.8C687.8,524.1 687.2,527.2 690.4,527.6C693.3,528.0 693.3,525.2 696.6,524.4C699.4,523.6 699.7,524.9 702.7,524.4C705.8,523.9 705.8,522.3 708.8,522.5C711.9,522.8 711.7,524.5 714.9,525.4C717.8,526.2 718.0,525.7 721.0,526.0C724.1,526.3 724.5,527.6 727.2,526.6C730.6,525.3 730.5,520.7 733.3,521.3C736.6,522.0 735.6,527.0 739.4,529.1C741.7,530.4 742.4,528.4 745.5,528.2C748.5,528.0 748.6,527.9 751.6,528.2C754.7,528.5 755.0,530.2 757.7,529.5C761.1,528.6 760.5,526.2 763.9,525.0C766.6,524.0 766.9,524.8 770.0,525.0C773.1,525.3 773.3,524.9 776.1,526.0C779.4,527.4 779.8,531.1 782.2,530.0C785.9,528.3 784.8,521.5 788.3,520.3C790.9,519.5 791.1,523.6 794.4,526.0C797.2,528.0 798.2,530.2 800.6,529.1C804.3,527.4 803.4,520.7 806.7,520.3C809.6,519.9 809.2,526.2 812.8,527.6C815.3,528.6 815.9,525.0 818.9,525.0C822.0,525.0 822.3,528.3 825.0,527.6C828.4,526.7 827.6,523.3 831.1,521.9C833.7,520.9 834.7,521.4 837.3,522.8C840.8,524.7 839.9,526.7 843.4,528.5C846.0,529.8 846.6,529.7 849.5,529.1C852.7,528.4 852.4,527.2 855.6,526.0C858.5,524.9 858.7,525.4 861.7,524.4C864.9,523.4 865.1,521.2 867.8,521.9C871.3,522.8 870.6,526.7 874.0,527.6C876.7,528.3 876.9,525.8 880.1,525.0C883.0,524.2 883.6,523.4 886.2,524.4C889.7,525.8 889.6,530.4 892.3,529.8C895.7,529.1 895.2,522.3 898.4,521.9C901.3,521.5 901.1,527.1 904.6,528.2C907.2,529.0 907.5,526.2 910.7,525.7C913.6,525.2 913.7,526.0 916.8,526.3C919.8,526.6 919.8,526.9 922.9,526.9C926.0,526.9 926.0,526.9 929.0,526.3C932.1,525.7 932.0,524.7 935.1,524.4C938.1,524.1 938.6,523.8 941.3,525.0C944.7,526.5 944.0,528.1 947.4,529.8C950.1,531.2 950.6,531.7 953.5,531.3C956.7,530.9 956.4,528.5 959.6,528.2C962.6,527.9 962.7,530.1 965.7,530.0C968.8,529.8 968.8,527.4 971.8,527.6C975.0,527.8 975.0,530.9 978.0,530.7C981.1,530.4 980.7,527.9 984.1,526.6C986.9,525.5 987.6,525.0 990.2,526.0C993.7,527.3 993.1,530.9 996.3,531.3C999.2,531.7 999.1,528.6 1002.4,527.6C1005.2,526.7 1005.8,528.7 1008.5,527.6C1012.0,526.3 1011.7,522.6 1014.7,522.8C1017.8,523.0 1017.2,526.9 1020.8,528.5C1023.4,529.7 1024.1,529.4 1026.9,528.5C1030.2,527.4 1029.7,525.8 1033.0,524.4C1035.8,523.3 1036.1,523.7 1039.1,523.5C1042.2,523.4 1042.2,523.9 1045.2,523.8C1048.3,523.7 1048.3,523.0 1051.4,523.1C1054.4,523.3 1054.7,523.1 1057.5,524.4C1060.9,526.1 1060.4,528.7 1063.6,529.1C1066.5,529.5 1066.7,527.6 1069.7,526.0C1072.8,524.4 1073.2,522.0 1075.8,522.8C1079.3,523.9 1078.6,529.2 1081.9,529.8C1084.7,530.3 1084.8,525.6 1088.1,525.0C1090.9,524.5 1091.0,527.3 1094.2,527.6C1097.2,527.8 1097.3,525.9 1100.3,526.0C1103.4,526.2 1103.3,528.1 1106.4,528.2C1109.5,528.3 1109.4,526.6 1112.5,526.3C1115.5,526.0 1115.6,526.9 1118.7,526.9C1121.7,526.9 1121.7,526.6 1124.8,526.3C1127.8,526.0 1127.9,525.2 1130.9,525.7C1134.1,526.2 1133.9,527.1 1137.0,528.2C1140.0,529.3 1140.5,530.9 1143.1,530.0C1146.7,528.7 1145.9,524.5 1149.2,523.8C1152.0,523.3 1152.1,526.8 1155.4,527.6C1158.2,528.3 1158.5,526.7 1161.5,526.9C1164.6,527.1 1164.5,527.7 1167.6,528.5C1170.6,529.3 1170.6,529.8 1173.7,530.0C1176.7,530.1 1176.8,529.6 1179.8,529.1C1182.9,528.7 1183.2,529.4 1185.9,528.2C1189.3,526.7 1188.7,525.4 1192.1,523.8C1194.8,522.5 1195.2,522.1 1198.2,522.5C1201.4,522.9 1201.1,525.0 1204.3,525.4C1207.2,525.8 1207.4,524.0 1210.4,524.1C1213.5,524.3 1213.6,524.7 1216.5,526.0C1219.7,527.4 1219.9,530.1 1222.6,529.5C1226.0,528.8 1225.4,524.2 1228.8,523.5C1231.5,522.9 1231.6,526.2 1234.9,526.9C1237.7,527.5 1238.7,527.7 1241.0,526.0C1244.8,523.3 1244.1,518.1 1247.1,518.1C1250.2,518.1 1249.5,524.4 1253.2,526.0C1255.7,527.1 1256.4,523.3 1259.3,523.5C1262.5,523.7 1262.4,525.3 1265.5,526.9C1268.5,528.5 1268.6,530.2 1271.6,530.0C1274.7,529.8 1274.4,527.1 1277.7,526.0C1280.5,525.1 1280.8,526.5 1283.8,526.0C1287.0,525.4 1286.8,524.2 1289.9,523.8C1292.9,523.4 1293.7,522.8 1296.0,524.4C1299.9,527.1 1298.4,529.8 1302.2,532.5C1304.5,533.0 1305.2,532.9 1308.3,533.0C1311.3,533.0 1311.3,533.0 1314.4,533.0C1317.5,533.0 1317.5,533.0 1320.5,533.0C1323.6,533.0 1323.6,533.0 1326.6,533.0C1329.7,533.0 1329.7,533.0 1332.8,533.0C1335.8,533.0 1335.8,533.0 1338.9,533.0C1341.9,533.0 1341.9,533.0 1345.0,533.0C1348.0,533.0 1348.0,533.0 1351.1,533.0C1354.2,533.0 1354.2,533.0 1357.2,533.0C1360.3,533.0 1360.3,533.0 1363.3,533.0C1366.4,533.0 1366.4,533.0 1369.5,533.0C1372.5,533.0 1372.5,533.0 1375.6,533.0C1378.6,533.0 1378.6,533.0 1381.7,533.0C1384.7,533.0 1384.7,533.0 1387.8,533.0C1390.9,533.0 1390.9,533.0 1393.9,533.0C1397.0,533.0 1397.0,533.0 1400.0,533.0C1403.1,533.0 1403.1,533.0 1406.2,533.0C1409.2,533.0 1409.2,533.0 1412.3,533.0C1415.3,532.9 1415.4,533.0 1418.4,532.6C1421.5,532.2 1421.5,532.2 1424.5,531.3C1427.6,530.4 1427.8,530.7 1430.6,529.1C1433.9,527.2 1433.4,525.0 1436.7,524.4C1439.6,523.9 1439.8,525.7 1442.9,526.9C1445.9,528.1 1446.1,529.5 1449.0,529.1C1452.2,528.7 1451.8,526.2 1455.1,525.4C1457.9,524.8 1458.2,525.6 1461.2,526.3C1464.3,527.0 1464.9,529.4 1467.3,528.2C1471.1,526.4 1470.3,520.5 1473.4,520.3C1476.4,520.2 1476.4,527.3 1479.6,527.6C1482.5,527.8 1482.2,522.2 1485.7,521.3C1488.4,520.6 1488.6,523.3 1491.8,524.4C1494.7,525.4 1494.9,524.6 1497.9,525.4C1501.0,526.2 1500.9,526.6 1504.0,527.6C1507.1,528.6 1507.1,528.5 1510.1,529.4C1513.2,530.3 1513.8,532.3 1516.3,531.3C1519.9,529.8 1518.8,526.0 1522.4,524.4C1524.9,523.3 1528.5,526.0 1528.5,526.0L1528.5,533.0 L66.5,533.0 Z" fill="url(#gY)"/>
  <path d="M66.5,177.9C66.5,177.9 69.6,178.1 72.6,178.2C75.7,178.3 75.7,178.3 78.7,178.3C81.8,178.3 81.8,178.2 84.9,178.1C87.9,177.9 87.9,177.8 91.0,177.7C94.0,177.5 94.0,177.5 97.1,177.4C100.1,177.3 100.1,177.3 103.2,177.4C106.3,177.4 106.3,177.5 109.3,177.6C112.4,177.7 112.4,177.8 115.4,177.8C118.5,177.9 118.5,177.9 121.6,177.8C124.6,177.8 124.6,177.8 127.7,177.6C130.7,177.5 130.7,177.4 133.8,177.3C136.8,177.2 136.8,177.1 139.9,177.1C143.0,177.1 143.0,177.2 146.0,177.3C149.1,177.4 149.1,177.5 152.1,177.7C155.2,177.9 155.2,177.9 158.3,178.1C161.3,178.2 161.3,178.2 164.4,178.2C167.4,178.2 167.4,178.2 170.5,178.1C173.6,177.9 173.5,177.9 176.6,177.8C179.7,177.6 179.7,177.6 182.7,177.6C185.8,177.5 185.8,177.5 188.8,177.6C191.9,177.7 191.9,177.8 195.0,177.9C198.0,178.0 198.0,178.0 201.1,178.1C204.1,178.1 204.1,178.1 207.2,178.0C210.3,178.0 210.3,177.9 213.3,177.7C216.4,177.6 216.4,177.5 219.4,177.3C222.5,177.2 222.5,177.1 225.5,177.1C228.6,177.1 228.6,177.1 231.7,177.2C234.7,177.3 234.7,177.3 237.8,177.5C240.8,177.7 240.8,177.7 243.9,177.8C247.0,177.9 247.0,178.0 250.0,178.0C253.1,178.0 253.1,177.9 256.1,177.8C259.2,177.7 259.2,177.7 262.2,177.6C265.3,177.5 265.3,177.5 268.4,177.5C271.4,177.5 271.4,177.5 274.5,177.6C277.5,177.8 277.5,177.8 280.6,178.0C283.7,178.1 283.7,178.2 286.7,178.3C289.8,178.3 289.8,178.3 292.8,178.3C295.9,178.2 295.9,178.2 299.0,178.0C302.0,177.8 302.0,177.7 305.1,177.6C308.1,177.4 308.1,177.4 311.2,177.3C314.2,177.2 314.2,177.3 317.3,177.3C320.4,177.4 320.4,177.4 323.4,177.6C326.5,177.7 326.5,177.7 329.5,177.8C332.6,177.9 332.6,177.9 335.7,177.8C338.7,177.8 338.7,177.7 341.8,177.6C344.8,177.5 344.8,177.4 347.9,177.3C350.9,177.2 350.9,177.2 354.0,177.2C357.1,177.2 357.1,177.3 360.1,177.4C363.2,177.6 363.2,177.6 366.2,177.8C369.3,178.0 369.3,178.1 372.4,178.2C375.4,178.3 375.4,178.3 378.5,178.3C381.5,178.2 381.5,178.2 384.6,178.1C387.7,177.9 387.6,177.9 390.7,177.7C393.8,177.6 393.8,177.6 396.8,177.5C399.9,177.5 399.9,177.5 402.9,177.6C406.0,177.7 406.0,177.7 409.1,177.8C412.1,177.9 412.1,178.0 415.2,178.0C418.2,178.0 418.2,178.0 421.3,177.9C424.4,177.9 424.4,177.6 427.4,177.6C430.5,177.6 430.5,178.1 433.5,178.0C436.6,177.8 436.6,177.3 439.6,177.1C442.7,176.9 442.7,177.1 445.8,177.2C448.8,177.3 448.8,177.4 451.9,177.6C454.9,177.8 454.9,177.8 458.0,177.9C461.1,178.0 461.1,178.0 464.1,178.0C467.2,178.0 467.2,178.0 470.2,177.9C473.3,177.8 473.3,177.7 476.3,177.6C479.4,177.5 479.4,177.5 482.5,177.5C485.5,177.5 485.5,177.6 488.6,177.7C491.6,177.8 491.6,177.9 494.7,178.0C497.8,178.1 497.8,178.2 500.8,178.2C503.9,178.3 503.9,178.3 506.9,178.2C510.0,178.1 510.0,178.1 513.1,177.9C516.1,177.7 516.1,177.6 519.2,177.5C522.2,177.3 522.2,177.3 525.3,177.2C528.3,177.2 528.3,177.2 531.4,177.3C534.5,177.4 534.5,177.4 537.5,177.5C540.6,177.7 540.6,177.7 543.6,177.8C546.7,177.9 546.7,177.9 549.8,177.8C552.8,177.8 552.8,177.5 555.9,177.6C558.9,177.8 558.9,178.5 562.0,178.5C565.1,178.4 565.0,177.5 568.1,177.3C571.1,177.1 571.2,177.4 574.2,177.5C577.3,177.7 577.3,177.7 580.3,177.9C583.4,178.1 583.4,178.2 586.5,178.2C589.5,178.3 589.5,178.3 592.6,178.3C595.6,178.2 595.6,178.2 598.7,178.0C601.8,177.9 601.7,177.8 604.8,177.7C607.9,177.5 607.9,177.5 610.9,177.5C614.0,177.4 614.0,177.4 617.0,177.5C620.1,177.6 620.1,177.7 623.2,177.8C626.2,177.9 626.2,177.9 629.3,177.9C632.3,178.0 632.3,178.0 635.4,177.9C638.5,177.8 638.5,177.7 641.5,177.6C644.6,177.4 644.6,177.3 647.6,177.2C650.7,177.1 650.7,177.1 653.7,177.1C656.8,177.1 656.8,177.1 659.9,177.3C662.9,177.4 662.9,177.5 666.0,177.7C669.0,177.9 669.0,177.9 672.1,178.0C675.2,178.1 675.2,178.1 678.2,178.1C681.3,178.1 681.3,178.0 684.3,177.9C687.4,177.8 687.4,177.8 690.4,177.7C693.5,177.6 693.5,177.5 696.6,177.6C699.6,177.6 699.6,177.6 702.7,177.7C705.7,177.8 705.7,177.9 708.8,178.0C711.9,178.1 711.9,178.2 714.9,178.2C718.0,178.2 718.0,178.2 721.0,178.1C724.1,178.0 724.1,177.9 727.2,177.7C730.2,177.6 730.2,177.5 733.3,177.3C736.3,177.2 736.3,177.2 739.4,177.1C742.4,177.1 742.4,177.1 745.5,177.2C748.6,177.4 748.6,177.4 751.6,177.6C754.7,177.7 754.7,177.8 757.7,177.8C760.8,177.9 760.8,177.9 763.9,177.9C766.9,177.8 766.9,177.8 770.0,177.7C773.0,177.6 773.0,177.5 776.1,177.4C779.1,177.4 779.1,177.3 782.2,177.4C785.3,177.4 785.3,177.5 788.3,177.6C791.4,177.8 791.4,177.9 794.4,178.0C797.5,178.2 797.5,178.2 800.6,178.3C803.6,178.4 803.6,178.3 806.7,178.3C809.7,178.2 809.7,178.1 812.8,178.0C815.9,177.8 815.8,177.7 818.9,177.6C822.0,177.4 822.0,177.4 825.0,177.4C828.1,177.3 828.1,177.4 831.1,177.5C834.2,177.5 834.2,177.6 837.3,177.7C840.3,177.8 840.3,177.8 843.4,177.9C846.4,177.9 846.4,177.9 849.5,177.8C852.6,177.7 852.6,177.7 855.6,177.5C858.7,177.4 858.7,177.3 861.7,177.2C864.8,177.1 864.8,177.1 867.8,177.2C870.9,177.2 870.9,177.2 874.0,177.4C877.0,177.6 877.0,177.6 880.1,177.8C883.1,178.0 883.1,178.0 886.2,178.1C889.3,178.2 889.4,177.6 892.3,178.2C895.5,178.8 895.4,180.7 898.4,180.6C901.5,180.5 901.3,178.5 904.6,177.7C907.5,176.9 907.6,177.5 910.7,177.6C913.7,177.6 913.7,177.6 916.8,177.7C919.8,177.8 919.8,177.9 922.9,178.0C926.0,178.1 926.0,178.1 929.0,178.1C932.1,178.1 932.1,178.1 935.1,178.0C938.2,177.9 938.2,177.8 941.3,177.6C944.3,177.4 944.3,177.4 947.4,177.2C950.4,177.1 950.4,177.1 953.5,177.1C956.5,177.1 956.5,177.1 959.6,177.3C962.7,177.4 962.7,177.5 965.7,177.6C968.8,177.8 968.8,177.8 971.8,177.9C974.9,178.0 974.9,178.0 978.0,177.9C981.0,177.9 981.0,177.8 984.1,177.7C987.1,177.6 987.1,177.6 990.2,177.5C993.2,177.4 993.3,177.4 996.3,177.5C999.4,177.5 999.4,177.6 1002.4,177.7C1005.5,177.9 1005.5,177.9 1008.5,178.1C1011.6,178.2 1011.6,178.3 1014.7,178.3C1017.7,178.3 1017.7,178.3 1020.8,178.2C1023.8,178.1 1023.8,178.0 1026.9,177.9C1030.0,177.7 1029.9,177.6 1033.0,177.5C1036.1,177.3 1036.1,177.3 1039.1,177.3C1042.2,177.3 1042.2,177.3 1045.2,177.4C1048.3,177.5 1048.3,177.5 1051.4,177.7C1054.4,177.8 1054.4,177.8 1057.5,177.8C1060.5,177.9 1060.5,177.9 1063.6,177.8C1066.7,177.7 1066.7,177.6 1069.7,177.5C1072.8,177.4 1072.8,177.3 1075.8,177.2C1078.9,177.2 1078.9,177.2 1081.9,177.2C1085.0,177.3 1085.0,177.3 1088.1,177.5C1091.1,177.7 1091.1,177.7 1094.2,177.9C1097.2,178.1 1097.2,178.1 1100.3,178.2C1103.4,178.3 1103.4,178.3 1106.4,178.2C1109.5,178.1 1109.5,178.1 1112.5,178.0C1115.6,177.8 1115.6,177.8 1118.7,177.6C1121.7,177.5 1121.7,177.5 1124.8,177.5C1127.8,177.5 1127.8,177.6 1130.9,177.7C1133.9,177.8 1133.9,177.8 1137.0,177.9C1140.1,178.0 1140.1,178.0 1143.1,178.0C1146.2,178.0 1146.2,178.0 1149.2,177.9C1152.3,177.8 1152.3,177.7 1155.4,177.5C1158.4,177.3 1158.4,177.3 1161.5,177.2C1164.5,177.1 1164.5,177.1 1167.6,177.1C1170.6,177.1 1170.6,177.2 1173.7,177.3C1176.8,177.5 1176.8,177.5 1179.8,177.7C1182.9,177.9 1182.9,177.9 1185.9,178.0C1189.0,178.0 1189.0,178.0 1192.1,178.0C1195.1,177.9 1195.1,177.9 1198.2,177.8C1201.2,177.7 1201.2,177.6 1204.3,177.6C1207.3,177.5 1207.4,177.5 1210.4,177.5C1213.5,177.6 1213.5,177.6 1216.5,177.8C1219.6,177.9 1219.6,178.0 1222.6,178.1C1225.7,178.2 1225.7,178.3 1228.8,178.3C1231.8,178.3 1231.8,178.3 1234.9,178.1C1237.9,178.0 1237.9,177.9 1241.0,177.7C1244.1,177.6 1244.0,177.5 1247.1,177.4C1250.2,177.2 1250.2,177.2 1253.2,177.2C1256.3,177.2 1256.3,177.2 1259.3,177.4C1262.4,177.5 1262.4,177.5 1265.5,177.6C1268.5,177.8 1268.5,177.8 1271.6,177.8C1274.6,177.9 1274.6,177.9 1277.7,177.8C1280.8,177.7 1280.8,177.6 1283.8,177.5C1286.9,177.4 1286.9,177.4 1289.9,177.3C1293.0,177.3 1296.0,177.3 1296.0,177.3" fill="none" stroke="#2ec7c9" stroke-width="2" stroke-linejoin="round"/>
  <path d="M1424.5,177.6C1424.5,177.6 1427.6,177.7 1430.6,177.8C1433.7,177.9 1433.7,178.0 1436.7,178.1C1439.8,178.2 1439.8,178.2 1442.9,178.2C1445.9,178.2 1445.9,178.2 1449.0,178.0C1452.0,177.9 1452.0,177.8 1455.1,177.6C1458.2,177.4 1458.2,177.4 1461.2,177.3C1464.3,177.1 1464.3,177.1 1467.3,177.2C1470.4,177.2 1470.4,177.2 1473.4,177.3C1476.5,177.5 1476.5,177.5 1479.6,177.7C1482.6,177.8 1482.6,177.8 1485.7,177.9C1488.7,177.9 1488.7,177.9 1491.8,177.8C1494.9,177.7 1494.9,177.7 1497.9,177.6C1501.0,177.5 1501.0,177.4 1504.0,177.4C1507.1,177.3 1507.1,177.3 1510.1,177.4C1513.2,177.5 1513.2,177.6 1516.3,177.7C1519.3,177.9 1519.3,178.0 1522.4,178.1C1525.4,178.3 1528.5,178.3 1528.5,178.3" fill="none" stroke="#2ec7c9" stroke-width="2" stroke-linejoin="round"/>
  <path d="M66.5,381.0C66.5,381.0 70.8,425.1 72.6,421.0C75.7,414.3 76.2,355.3 78.7,354.0C81.1,352.9 81.8,408.4 84.9,415.0C86.6,418.8 89.9,394.2 91.0,380.0C94.8,327.0 94.3,253.5 97.1,247.0C99.2,241.9 99.3,309.6 103.2,351.0C104.2,361.6 105.9,372.6 109.3,377.0C110.8,379.0 114.6,371.5 115.4,367.0C119.5,345.9 119.6,308.2 121.6,313.0C124.5,320.6 124.9,393.2 127.7,398.0C129.8,401.6 130.4,344.3 133.8,334.0C135.3,329.5 138.1,350.1 139.9,361.0C143.0,380.1 142.4,399.5 146.0,409.0C147.3,412.3 149.4,399.3 152.1,393.0C154.3,388.1 156.9,386.2 158.3,381.0C161.8,367.4 161.7,360.0 164.4,346.0C166.6,334.4 169.3,310.8 170.5,317.0C174.2,336.8 173.6,402.7 176.6,411.0C178.5,416.3 180.5,375.0 182.7,351.0C185.4,321.0 186.7,272.5 188.8,276.0C191.6,280.5 190.7,343.1 195.0,371.0C195.6,375.5 200.3,352.6 201.1,357.0C205.2,381.8 203.8,430.8 207.2,444.0C208.7,450.0 211.3,420.7 213.3,405.0C216.2,381.9 215.2,369.3 219.4,347.0C220.1,343.7 224.6,338.8 225.5,341.0C229.5,350.0 228.8,372.7 231.7,375.0C233.7,376.7 236.3,347.1 237.8,351.0C241.2,359.9 241.5,407.2 243.9,407.0C246.4,406.8 246.2,372.5 250.0,350.0C251.1,343.7 252.8,337.7 256.1,335.0C257.7,333.7 259.9,340.2 262.2,340.0C264.8,339.8 267.6,331.5 268.4,334.0C272.5,348.7 272.2,384.0 274.5,383.0C277.0,382.0 278.9,322.4 280.6,329.0C283.8,341.2 282.3,390.2 286.7,430.0C287.2,434.6 292.5,444.1 292.8,440.0C297.4,376.9 295.4,295.5 299.0,262.0C300.2,249.9 301.9,300.5 305.1,326.0C306.8,340.1 308.3,347.1 311.2,361.0C313.2,371.1 315.9,390.3 317.3,386.0C320.8,375.5 320.6,328.2 323.4,324.0C325.5,321.0 327.2,368.9 329.5,368.0C332.1,366.9 332.0,328.8 335.7,319.0C336.9,315.6 340.8,328.3 341.8,335.0C345.7,362.7 345.2,377.0 347.9,405.0C350.1,427.4 351.9,463.8 354.0,461.0C356.8,457.4 356.9,417.7 360.1,389.0C361.8,374.5 362.8,359.2 366.2,353.0C367.7,350.4 371.4,361.0 372.4,367.0C376.2,390.2 377.2,437.5 378.5,426.0C382.1,392.7 382.1,255.8 384.6,255.0C387.0,254.2 388.1,416.8 390.7,422.0C393.0,426.4 394.0,288.0 396.8,279.0C398.9,272.4 399.0,341.6 402.9,383.0C403.9,392.4 406.6,405.8 409.1,406.0C411.5,406.2 411.5,389.1 415.2,384.0C416.4,382.3 420.6,391.4 421.3,389.0C425.5,373.8 423.2,355.2 427.4,340.0C428.1,337.6 432.7,342.1 433.5,345.0C437.6,360.5 435.5,373.4 439.6,386.0C440.4,388.2 444.8,384.6 445.8,382.0C449.7,371.8 448.9,356.4 451.9,354.0C453.8,352.4 456.9,364.5 458.0,372.0C461.8,398.9 461.9,442.2 464.1,440.0C466.8,437.4 467.4,365.4 470.2,360.0C472.3,356.2 474.1,418.7 476.3,417.0C479.0,415.1 480.0,377.4 482.5,351.0C484.9,325.0 486.7,280.5 488.6,286.0C491.5,294.5 490.9,346.2 494.7,386.0C495.8,397.0 499.1,416.5 500.8,413.0C504.0,406.5 504.3,381.8 506.9,361.0C509.2,343.0 511.3,310.7 513.1,316.0C516.2,325.5 515.3,379.0 519.2,398.0C520.2,403.2 523.8,373.0 525.3,376.5C528.7,384.6 528.8,425.6 531.4,427.0C533.7,428.2 533.4,396.2 537.5,383.0C538.3,380.6 542.3,385.3 543.6,388.0C547.1,394.9 548.9,412.3 549.8,407.0C553.8,381.1 553.6,306.9 555.9,310.0C558.5,313.7 558.4,402.6 562.0,424.0C563.3,431.8 565.3,399.3 568.1,383.0C570.2,370.9 570.5,364.4 574.2,353.0C575.4,349.2 578.7,348.6 580.3,345.0C583.6,337.8 585.5,321.2 586.5,326.0C590.3,344.4 588.0,374.1 592.6,403.0C592.9,405.3 598.3,406.3 598.7,404.0C603.2,375.9 602.1,330.3 604.8,327.0C607.0,324.3 606.6,365.2 610.9,389.0C611.5,392.0 614.6,394.0 617.0,394.0C619.5,394.0 622.7,392.0 623.2,389.0C627.6,361.0 626.1,325.4 629.3,316.5C631.0,311.8 632.9,354.9 635.4,355.0C637.8,355.1 640.0,311.2 641.5,317.0C644.9,330.0 645.0,399.4 647.6,402.0C649.9,404.2 650.0,358.0 653.7,329.0C654.9,320.0 658.4,303.2 659.9,307.0C663.3,316.0 663.7,339.4 666.0,361.0C668.6,385.8 670.2,428.2 672.1,423.0C675.1,415.0 673.8,365.3 678.2,328.0C678.7,323.7 683.6,315.8 684.3,319.0C688.5,338.6 687.0,373.6 690.4,385.0C691.9,389.6 694.1,369.4 696.6,359.0C699.0,349.0 700.5,344.1 702.7,334.0C705.4,321.3 707.6,295.4 708.8,302.0C712.5,322.2 710.5,368.6 714.9,401.0C715.4,404.6 719.1,395.9 721.0,392.0C724.0,386.3 724.6,377.2 727.2,377.0C729.5,376.8 732.0,394.1 733.3,391.0C736.9,381.5 736.8,346.4 739.4,345.5C741.7,344.6 741.3,371.5 745.5,386.5C746.2,388.9 751.0,386.6 751.6,389.0C755.9,405.6 755.4,434.6 757.7,434.0C760.3,433.4 762.0,405.3 763.9,386.0C766.9,353.3 767.1,309.1 770.0,304.0C772.0,300.3 773.4,340.0 776.1,364.0C778.3,383.6 780.0,414.8 782.2,413.0C784.9,410.8 784.2,370.4 788.3,354.0C789.1,350.8 793.7,359.4 794.4,364.0C798.6,389.0 799.3,440.1 800.6,428.0C804.2,394.5 804.3,246.8 806.7,250.0C809.2,253.6 809.5,417.8 812.8,445.0C814.4,458.2 814.3,386.9 818.9,351.0C819.2,348.5 824.3,351.3 825.0,349.0C829.2,336.1 829.1,310.5 831.1,313.0C834.0,316.5 834.4,343.7 837.3,364.0C839.3,378.9 841.1,401.8 843.4,401.0C845.9,400.2 845.9,367.9 849.5,360.0C850.8,357.1 855.2,379.1 855.6,374.0C860.1,321.5 858.6,234.0 861.7,216.0C863.5,216.0 865.4,268.8 867.8,304.0C870.3,340.4 870.0,371.9 874.0,395.0C874.9,400.3 878.3,383.2 880.1,375.0C883.2,361.0 883.7,339.9 886.2,339.5C888.6,339.1 889.2,369.3 892.3,373.0C894.1,375.1 895.3,356.6 898.4,354.0C900.2,352.6 902.4,363.5 904.6,363.0C907.3,362.3 907.4,353.5 910.7,351.0C912.3,349.7 916.2,351.1 916.8,353.5C921.1,371.7 920.4,402.4 922.9,402.5C925.3,402.6 926.3,373.4 929.0,354.0C931.2,338.0 933.6,308.1 935.1,314.0C938.5,326.5 937.2,377.2 941.3,400.0C942.1,404.8 946.0,379.8 947.4,383.0C950.9,391.0 951.8,433.7 953.5,428.0C956.7,417.3 957.3,340.7 959.6,342.0C962.1,343.5 962.5,423.2 965.7,435.0C967.4,441.2 968.4,395.2 971.8,387.0C973.3,383.6 974.9,403.7 978.0,406.0C979.8,407.3 983.7,400.6 984.1,396.0C988.6,345.0 988.3,255.4 990.2,267.0C993.2,285.4 992.9,440.5 996.3,471.0C997.8,484.9 999.0,393.2 1002.4,378.0C1003.9,371.6 1007.7,427.4 1008.5,417.0C1012.6,366.0 1011.9,233.9 1014.7,224.5C1016.8,217.1 1016.1,319.1 1020.8,375.0C1021.0,377.7 1025.2,369.9 1026.9,371.0C1030.1,373.1 1031.9,386.0 1033.0,383.0C1036.8,373.0 1036.0,356.2 1039.1,338.5C1040.9,328.6 1044.1,308.5 1045.2,314.0C1049.0,332.3 1047.4,364.7 1051.4,398.0C1052.3,405.9 1055.0,417.0 1057.5,417.0C1059.9,417.0 1061.1,405.6 1063.6,398.0C1066.0,390.6 1068.8,387.2 1069.7,379.5C1073.7,347.0 1073.3,298.0 1075.8,297.5C1078.2,297.0 1077.4,346.6 1081.9,377.0C1082.3,379.6 1087.1,377.6 1088.1,380.0C1092.0,389.2 1092.8,410.8 1094.2,406.0C1097.7,393.6 1097.7,338.4 1100.3,337.0C1102.6,335.8 1104.7,406.6 1106.4,399.5C1109.5,387.0 1109.8,293.5 1112.5,288.0C1114.7,283.7 1114.7,353.9 1118.7,375.0C1119.6,380.3 1121.0,361.1 1124.8,354.0C1125.9,351.9 1130.4,349.7 1130.9,352.0C1135.3,374.7 1132.6,394.8 1137.0,416.5C1137.5,419.0 1142.7,415.3 1143.1,412.5C1147.6,381.5 1146.4,337.2 1149.2,332.0C1151.3,328.2 1151.8,379.7 1155.4,390.0C1156.7,394.1 1159.2,367.3 1161.5,368.0C1164.1,368.9 1165.3,394.7 1167.6,394.0C1170.2,393.3 1170.6,367.9 1173.7,364.5C1175.5,362.5 1176.9,378.9 1179.8,380.5C1181.8,381.5 1182.8,373.7 1185.9,371.0C1187.7,369.5 1191.7,372.3 1192.1,370.0C1196.6,336.7 1196.0,278.7 1198.2,282.0C1200.8,285.9 1201.8,386.8 1204.3,388.0C1206.7,389.2 1207.5,296.2 1210.4,288.0C1212.4,282.6 1214.3,327.6 1216.5,354.0C1219.2,384.8 1219.8,425.9 1222.6,431.0C1224.7,434.7 1226.4,398.0 1228.8,376.0C1231.3,352.4 1230.7,333.9 1234.9,317.0C1235.6,313.9 1238.6,326.1 1241.0,326.0C1243.5,325.9 1244.9,320.4 1247.1,316.5C1249.8,311.6 1251.6,302.0 1253.2,304.0C1256.5,308.2 1257.3,320.7 1259.3,332.0C1262.2,347.1 1263.9,354.7 1265.5,370.0C1268.8,402.7 1269.1,451.4 1271.6,452.0C1274.0,452.6 1274.9,404.6 1277.7,373.0C1279.8,349.4 1281.8,309.5 1283.8,314.0C1286.7,320.7 1285.5,371.5 1289.9,401.0C1290.4,403.9 1295.8,391.9 1296.0,395.0C1300.7,444.5 1297.5,479.7 1302.2,532.5C1302.4,533.0 1305.8,532.9 1308.3,533.0C1310.7,533.0 1312.0,533.0 1314.4,533.0C1316.8,533.0 1318.1,533.0 1320.5,533.0C1323.0,533.0 1324.2,533.0 1326.6,533.0C1329.1,533.0 1330.3,533.0 1332.8,533.0C1335.2,533.0 1336.4,533.0 1338.9,533.0C1341.3,533.0 1342.5,533.0 1345.0,533.0C1347.4,533.0 1348.7,533.0 1351.1,533.0C1353.5,533.0 1354.8,533.0 1357.2,533.0C1359.7,533.0 1360.9,533.0 1363.3,533.0C1365.8,533.0 1367.0,533.0 1369.5,533.0C1371.9,533.0 1373.1,533.0 1375.6,533.0C1378.0,533.0 1379.2,533.0 1381.7,533.0C1384.1,533.0 1385.4,533.0 1387.8,533.0C1390.3,533.0 1391.5,533.0 1393.9,533.0C1396.4,533.0 1397.6,533.0 1400.0,533.0C1402.5,533.0 1403.7,533.0 1406.2,533.0C1408.6,533.0 1409.8,533.0 1412.3,533.0C1414.7,533.0 1418.0,533.0 1418.4,533.0C1422.9,509.6 1422.2,494.6 1424.5,469.0C1427.0,441.4 1428.3,427.6 1430.6,400.0C1433.2,370.2 1434.7,320.1 1436.7,325.5C1439.6,333.3 1439.2,411.0 1442.9,433.0C1444.1,440.2 1446.2,412.2 1449.0,398.5C1451.1,387.8 1451.7,382.2 1455.1,372.0C1456.6,367.6 1458.9,366.1 1461.2,362.0C1463.8,357.5 1466.5,355.6 1467.3,350.5C1471.4,327.0 1472.0,280.3 1473.4,290.5C1476.9,315.5 1476.9,432.4 1479.6,438.5C1481.8,443.4 1482.1,341.0 1485.7,318.0C1487.0,309.8 1488.0,350.8 1491.8,360.5C1492.9,363.4 1497.1,346.0 1497.9,349.5C1502.0,367.2 1500.0,396.8 1504.0,413.5C1504.9,417.2 1508.2,405.9 1510.1,400.5C1513.1,392.1 1512.4,385.8 1516.3,379.0C1517.3,377.2 1522.0,381.3 1522.4,379.0C1526.9,349.1 1528.5,298.5 1528.5,298.5" fill="none" stroke="#0f96ff" stroke-width="2" stroke-linejoin="round"/>
  <path d="M66.5,524.4C66.5,524.4 69.6,529.1 72.6,529.0C75.7,528.8 75.5,524.2 78.7,523.8C81.6,523.5 81.6,527.0 84.9,527.6C87.7,528.1 88.1,527.3 91.0,526.0C94.2,524.5 93.8,522.7 97.1,522.0C99.9,521.4 100.4,522.2 103.2,523.5C106.5,525.0 106.6,528.2 109.3,527.6C112.7,526.9 112.1,521.6 115.4,521.0C118.2,520.5 118.2,524.0 121.6,525.4C124.3,526.5 124.7,526.3 127.7,526.0C130.8,525.6 130.8,523.9 133.8,524.0C136.9,524.1 136.8,525.5 139.9,526.3C142.9,527.0 143.0,526.3 146.0,527.0C149.1,527.7 149.0,528.8 152.1,529.0C155.2,529.1 155.6,529.1 158.3,527.6C161.8,525.6 161.2,522.1 164.4,521.9C167.4,521.8 167.1,525.1 170.5,527.0C173.2,528.5 173.6,528.8 176.6,528.8C179.7,528.8 180.0,528.5 182.7,527.0C186.1,525.1 185.9,521.7 188.8,521.9C192.0,522.2 191.6,527.3 195.0,528.0C197.7,528.6 198.1,524.2 201.1,524.4C204.3,524.7 203.9,528.3 207.2,529.0C210.0,529.6 210.2,527.9 213.3,527.0C216.3,526.1 216.4,526.4 219.4,525.4C222.6,524.3 222.4,523.1 225.5,522.8C228.5,522.6 228.6,524.1 231.7,524.4C234.7,524.6 234.9,523.2 237.8,523.8C241.0,524.5 240.9,527.2 243.9,527.0C247.1,526.7 246.8,524.7 250.0,522.8C253.0,521.0 253.6,518.7 256.1,519.7C259.8,521.1 258.6,526.2 262.2,527.6C264.7,528.6 265.1,525.0 268.4,524.4C271.3,523.9 271.4,525.1 274.5,525.4C277.5,525.7 277.9,524.5 280.6,525.7C284.0,527.2 283.4,530.1 286.7,530.7C289.5,531.2 289.6,528.8 292.8,528.0C295.8,527.3 295.9,527.5 299.0,527.6C302.0,527.7 302.0,528.5 305.1,528.5C308.1,528.5 308.3,527.1 311.2,527.6C314.4,528.2 314.9,531.8 317.3,530.7C321.0,529.0 319.5,524.9 323.4,521.9C325.7,520.2 327.0,520.1 329.5,521.3C333.1,523.0 332.2,526.7 335.7,527.6C338.3,528.3 339.0,523.9 341.8,524.4C345.1,525.1 344.4,528.4 347.9,530.0C350.5,531.2 351.1,530.7 354.0,530.0C357.2,529.2 356.9,527.8 360.1,527.0C363.0,526.3 363.6,528.1 366.2,527.0C369.7,525.6 369.1,522.5 372.4,522.0C375.2,521.5 375.6,525.3 378.5,525.0C381.7,524.6 382.1,519.6 384.6,520.6C388.3,522.1 386.9,527.8 390.7,530.0C393.0,531.3 393.7,528.6 396.8,527.6C399.8,526.6 400.0,525.8 402.9,526.0C406.1,526.2 405.9,527.6 409.1,528.5C412.0,529.3 412.1,529.4 415.2,529.4C418.2,529.4 418.6,529.7 421.3,528.5C424.7,526.9 424.1,525.7 427.4,523.8C430.2,522.1 430.9,520.5 433.5,521.3C437.0,522.4 436.4,527.2 439.6,527.6C442.5,528.0 442.3,524.1 445.8,522.8C448.5,521.7 449.0,522.0 451.9,522.8C455.1,523.6 455.0,524.3 458.0,526.0C461.1,527.8 461.1,529.8 464.1,529.8C467.2,529.8 467.4,525.6 470.2,526.0C473.5,526.4 473.0,530.7 476.3,531.3C479.2,531.8 480.2,530.6 482.5,528.2C486.3,524.0 485.7,518.1 488.6,518.1C491.8,518.5 490.5,526.2 494.7,529.8C496.7,531.5 497.8,528.8 500.8,528.8C503.9,528.9 504.4,531.0 506.9,530.0C510.5,528.5 509.5,524.9 513.1,523.8C515.7,522.9 516.1,525.0 519.2,526.0C522.2,526.9 522.4,526.5 525.3,527.6C528.5,528.8 528.8,531.5 531.4,530.7C534.9,529.6 534.0,524.9 537.5,523.8C540.1,523.0 540.5,525.5 543.6,527.0C546.7,528.5 546.9,530.3 549.8,529.8C553.0,529.3 552.9,524.8 555.9,525.0C559.0,525.2 558.6,530.0 562.0,530.7C564.7,531.3 565.1,529.2 568.1,527.6C571.2,526.0 571.2,524.4 574.2,524.4C577.3,524.4 577.5,528.0 580.3,527.6C583.6,527.2 583.5,522.7 586.5,522.8C589.6,523.0 589.1,527.1 592.6,528.2C595.2,529.0 595.6,527.4 598.7,526.6C601.8,525.8 601.8,525.0 604.8,525.0C607.9,525.0 607.9,526.6 610.9,526.6C614.0,526.6 614.2,524.6 617.0,525.0C620.3,525.5 619.9,527.6 623.2,528.5C626.0,529.3 626.5,529.4 629.3,528.5C632.6,527.4 632.1,525.5 635.4,524.4C638.2,523.5 638.6,523.6 641.5,524.4C644.8,525.2 644.6,527.7 647.6,527.6C650.8,527.4 650.4,524.8 653.7,523.8C656.6,522.9 657.3,522.5 659.9,523.8C663.5,525.6 662.4,528.2 666.0,530.0C668.5,531.3 669.7,531.4 672.1,530.0C675.8,527.8 674.5,525.0 678.2,522.8C680.6,521.4 681.6,521.7 684.3,522.8C687.8,524.1 687.2,527.2 690.4,527.6C693.3,528.0 693.3,525.2 696.6,524.4C699.4,523.6 699.7,524.9 702.7,524.4C705.8,523.9 705.8,522.3 708.8,522.5C711.9,522.8 711.7,524.5 714.9,525.4C717.8,526.2 718.0,525.7 721.0,526.0C724.1,526.3 724.5,527.6 727.2,526.6C730.6,525.3 730.5,520.7 733.3,521.3C736.6,522.0 735.6,527.0 739.4,529.1C741.7,530.4 742.4,528.4 745.5,528.2C748.5,528.0 748.6,527.9 751.6,528.2C754.7,528.5 755.0,530.2 757.7,529.5C761.1,528.6 760.5,526.2 763.9,525.0C766.6,524.0 766.9,524.8 770.0,525.0C773.1,525.3 773.3,524.9 776.1,526.0C779.4,527.4 779.8,531.1 782.2,530.0C785.9,528.3 784.8,521.5 788.3,520.3C790.9,519.5 791.1,523.6 794.4,526.0C797.2,528.0 798.2,530.2 800.6,529.1C804.3,527.4 803.4,520.7 806.7,520.3C809.6,519.9 809.2,526.2 812.8,527.6C815.3,528.6 815.9,525.0 818.9,525.0C822.0,525.0 822.3,528.3 825.0,527.6C828.4,526.7 827.6,523.3 831.1,521.9C833.7,520.9 834.7,521.4 837.3,522.8C840.8,524.7 839.9,526.7 843.4,528.5C846.0,529.8 846.6,529.7 849.5,529.1C852.7,528.4 852.4,527.2 855.6,526.0C858.5,524.9 858.7,525.4 861.7,524.4C864.9,523.4 865.1,521.2 867.8,521.9C871.3,522.8 870.6,526.7 874.0,527.6C876.7,528.3 876.9,525.8 880.1,525.0C883.0,524.2 883.6,523.4 886.2,524.4C889.7,525.8 889.6,530.4 892.3,529.8C895.7,529.1 895.2,522.3 898.4,521.9C901.3,521.5 901.1,527.1 904.6,528.2C907.2,529.0 907.5,526.2 910.7,525.7C913.6,525.2 913.7,526.0 916.8,526.3C919.8,526.6 919.8,526.9 922.9,526.9C926.0,526.9 926.0,526.9 929.0,526.3C932.1,525.7 932.0,524.7 935.1,524.4C938.1,524.1 938.6,523.8 941.3,525.0C944.7,526.5 944.0,528.1 947.4,529.8C950.1,531.2 950.6,531.7 953.5,531.3C956.7,530.9 956.4,528.5 959.6,528.2C962.6,527.9 962.7,530.1 965.7,530.0C968.8,529.8 968.8,527.4 971.8,527.6C975.0,527.8 975.0,530.9 978.0,530.7C981.1,530.4 980.7,527.9 984.1,526.6C986.9,525.5 987.6,525.0 990.2,526.0C993.7,527.3 993.1,530.9 996.3,531.3C999.2,531.7 999.1,528.6 1002.4,527.6C1005.2,526.7 1005.8,528.7 1008.5,527.6C1012.0,526.3 1011.7,522.6 1014.7,522.8C1017.8,523.0 1017.2,526.9 1020.8,528.5C1023.4,529.7 1024.1,529.4 1026.9,528.5C1030.2,527.4 1029.7,525.8 1033.0,524.4C1035.8,523.3 1036.1,523.7 1039.1,523.5C1042.2,523.4 1042.2,523.9 1045.2,523.8C1048.3,523.7 1048.3,523.0 1051.4,523.1C1054.4,523.3 1054.7,523.1 1057.5,524.4C1060.9,526.1 1060.4,528.7 1063.6,529.1C1066.5,529.5 1066.7,527.6 1069.7,526.0C1072.8,524.4 1073.2,522.0 1075.8,522.8C1079.3,523.9 1078.6,529.2 1081.9,529.8C1084.7,530.3 1084.8,525.6 1088.1,525.0C1090.9,524.5 1091.0,527.3 1094.2,527.6C1097.2,527.8 1097.3,525.9 1100.3,526.0C1103.4,526.2 1103.3,528.1 1106.4,528.2C1109.5,528.3 1109.4,526.6 1112.5,526.3C1115.5,526.0 1115.6,526.9 1118.7,526.9C1121.7,526.9 1121.7,526.6 1124.8,526.3C1127.8,526.0 1127.9,525.2 1130.9,525.7C1134.1,526.2 1133.9,527.1 1137.0,528.2C1140.0,529.3 1140.5,530.9 1143.1,530.0C1146.7,528.7 1145.9,524.5 1149.2,523.8C1152.0,523.3 1152.1,526.8 1155.4,527.6C1158.2,528.3 1158.5,526.7 1161.5,526.9C1164.6,527.1 1164.5,527.7 1167.6,528.5C1170.6,529.3 1170.6,529.8 1173.7,530.0C1176.7,530.1 1176.8,529.6 1179.8,529.1C1182.9,528.7 1183.2,529.4 1185.9,528.2C1189.3,526.7 1188.7,525.4 1192.1,523.8C1194.8,522.5 1195.2,522.1 1198.2,522.5C1201.4,522.9 1201.1,525.0 1204.3,525.4C1207.2,525.8 1207.4,524.0 1210.4,524.1C1213.5,524.3 1213.6,524.7 1216.5,526.0C1219.7,527.4 1219.9,530.1 1222.6,529.5C1226.0,528.8 1225.4,524.2 1228.8,523.5C1231.5,522.9 1231.6,526.2 1234.9,526.9C1237.7,527.5 1238.7,527.7 1241.0,526.0C1244.8,523.3 1244.1,518.1 1247.1,518.1C1250.2,518.1 1249.5,524.4 1253.2,526.0C1255.7,527.1 1256.4,523.3 1259.3,523.5C1262.5,523.7 1262.4,525.3 1265.5,526.9C1268.5,528.5 1268.6,530.2 1271.6,530.0C1274.7,529.8 1274.4,527.1 1277.7,526.0C1280.5,525.1 1280.8,526.5 1283.8,526.0C1287.0,525.4 1286.8,524.2 1289.9,523.8C1292.9,523.4 1293.7,522.8 1296.0,524.4C1299.9,527.1 1298.4,529.8 1302.2,532.5C1304.5,533.0 1305.2,532.9 1308.3,533.0C1311.3,533.0 1311.3,533.0 1314.4,533.0C1317.5,533.0 1317.5,533.0 1320.5,533.0C1323.6,533.0 1323.6,533.0 1326.6,533.0C1329.7,533.0 1329.7,533.0 1332.8,533.0C1335.8,533.0 1335.8,533.0 1338.9,533.0C1341.9,533.0 1341.9,533.0 1345.0,533.0C1348.0,533.0 1348.0,533.0 1351.1,533.0C1354.2,533.0 1354.2,533.0 1357.2,533.0C1360.3,533.0 1360.3,533.0 1363.3,533.0C1366.4,533.0 1366.4,533.0 1369.5,533.0C1372.5,533.0 1372.5,533.0 1375.6,533.0C1378.6,533.0 1378.6,533.0 1381.7,533.0C1384.7,533.0 1384.7,533.0 1387.8,533.0C1390.9,533.0 1390.9,533.0 1393.9,533.0C1397.0,533.0 1397.0,533.0 1400.0,533.0C1403.1,533.0 1403.1,533.0 1406.2,533.0C1409.2,533.0 1409.2,533.0 1412.3,533.0C1415.3,532.9 1415.4,533.0 1418.4,532.6C1421.5,532.2 1421.5,532.2 1424.5,531.3C1427.6,530.4 1427.8,530.7 1430.6,529.1C1433.9,527.2 1433.4,525.0 1436.7,524.4C1439.6,523.9 1439.8,525.7 1442.9,526.9C1445.9,528.1 1446.1,529.5 1449.0,529.1C1452.2,528.7 1451.8,526.2 1455.1,525.4C1457.9,524.8 1458.2,525.6 1461.2,526.3C1464.3,527.0 1464.9,529.4 1467.3,528.2C1471.1,526.4 1470.3,520.5 1473.4,520.3C1476.4,520.2 1476.4,527.3 1479.6,527.6C1482.5,527.8 1482.2,522.2 1485.7,521.3C1488.4,520.6 1488.6,523.3 1491.8,524.4C1494.7,525.4 1494.9,524.6 1497.9,525.4C1501.0,526.2 1500.9,526.6 1504.0,527.6C1507.1,528.6 1507.1,528.5 1510.1,529.4C1513.2,530.3 1513.8,532.3 1516.3,531.3C1519.9,529.8 1518.8,526.0 1522.4,524.4C1524.9,523.3 1528.5,526.0 1528.5,526.0" fill="none" stroke="#ffc400" stroke-width="2" stroke-linejoin="round"/>
  <!-- top-right icons -->
  <g fill="none" stroke="#2d6cf0" stroke-width="1"><rect x="1531.5" y="120.5" width="15" height="13" rx=".8"/><path d="M1532.3,133.3L1536,129.4L1538.3,131.8L1542,126.4L1546.3,133.2" stroke-width="1.1"/><rect x="1534.5" y="123.3" width="1.6" height="1.6" fill="#2d6cf0" stroke="none"/></g>
  <g fill="none" stroke="#3d4251" stroke-width=".9"><rect x="1557.5" y="120.5" width="15" height="13" rx=".6"/><path d="M1557.5,125.5H1572.5M1557.5,129.5H1572.5M1562.5,120.5V133.5M1567.5,120.5V133.5"/><path d="M1557.5,121H1572.5" stroke-width="1.6"/></g>
  <!-- legend icons -->
  <g fill="#fff" stroke-width="1.4">
    <path d="M38,570.6H63" stroke="#0f96ff"/><circle cx="50.5" cy="570.6" r="5.3" stroke="#0f96ff"/>
    <path d="M114.5,570.6H139.5" stroke="#2ec7c9"/><circle cx="127" cy="570.6" r="5.3" stroke="#2ec7c9"/>
    <path d="M215,570.6H240" stroke="#ffc400"/><circle cx="227.5" cy="570.6" r="5.3" stroke="#ffc400"/>
  </g>
</svg>
<div class="abs" style="left:60px;top:148.6px;font-size:12px;line-height:14px;color:#888">笔</div>
<div class="abs" style="left:1523px;top:149px;font-size:12px;line-height:14px;color:#888">%</div>
<div class="yl" style="top:169.7px">18万</div><div class="yl" style="top:229.2px">15万</div><div class="yl" style="top:288.7px">12万</div><div class="yl" style="top:348.2px">9万</div><div class="yl" style="top:407.7px">6万</div><div class="yl" style="top:467.2px">3万</div><div class="yl" style="top:526.7px">0</div><div class="yr" style="top:169.7px">100</div><div class="yr" style="top:241.1px">80</div><div class="yr" style="top:312.5px">60</div><div class="yr" style="top:383.9px">40</div><div class="yr" style="top:455.3px">20</div><div class="yr" style="top:526.7px">0</div><div class="xl" style="left:26.5px">2018.06.28</div><div class="xl" style="left:99.9px">10:50</div><div class="xl" style="left:173.3px">11:02</div><div class="xl" style="left:246.7px">11:14</div><div class="xl" style="left:320.1px">11:26</div><div class="xl" style="left:393.5px">11:38</div><div class="xl" style="left:466.9px">11:50</div><div class="xl" style="left:540.3px">12:02</div><div class="xl" style="left:613.7px">12:14</div><div class="xl" style="left:687.2px">12:26</div><div class="xl" style="left:760.6px">12:38</div><div class="xl" style="left:834.0px">12:50</div><div class="xl" style="left:907.4px">13:02</div><div class="xl" style="left:980.8px">13:14</div><div class="xl" style="left:1054.2px">13:26</div><div class="xl" style="left:1127.6px">13:38</div><div class="xl" style="left:1201.0px">13:50</div><div class="xl" style="left:1274.4px">14:02</div><div class="xl" style="left:1347.8px">14:14</div><div class="xl" style="left:1421.2px">14:26</div>
<div class="lg" style="left:68px">交易量</div>
<div class="lg" style="left:144px">交易响应率</div>
<div class="lg" style="left:245px">交易量1</div>

<!-- ================= BOTTOM: multi-dim analysis ================= -->
<style>
.step{position:absolute;left:24px;width:28px;height:28px;border-radius:14px;background:#2468e5;color:#fff;font-size:15px;line-height:28px;text-align:center}
.stl{position:absolute;left:60px;font-size:14px;line-height:20px;color:#4a4f5c;white-space:nowrap}
.th{position:absolute;top:689px;height:23.5px;font-size:12px;line-height:22px;color:#6b7080;padding-left:7px;white-space:nowrap}
.tr{position:absolute;left:367px;width:1198.5px;height:22px;font-size:12px;line-height:20px;color:#444}
.tr.odd{background:#f5f6fa}
.tr span{position:absolute;top:0;white-space:nowrap}
.c1{left:30.5px}.c2{left:226px}.c3{left:421px}.c4{left:616.5px}.c5{left:812px}.c6{left:1008.5px}
.cb{position:absolute;left:6px;top:5px;width:12px;height:12px;border-radius:2.5px;border:1px solid #d6d6d6;background:#fff}
.cb.on{border:none;background:#2569ea}
.dh{position:absolute;background:#d0dffa;color:#2468e5;font-size:15px;line-height:27px;white-space:nowrap}
.dn{position:absolute;color:#2468e5;font-size:13.8px;line-height:27px;white-space:nowrap}
.di{position:absolute;font-size:12px;line-height:16px;color:#444;white-space:nowrap}
.pg{position:absolute;top:1022.4px;font-size:12px;line-height:16px;color:#444;white-space:nowrap}
</style>
<div class="abs" style="left:741px;top:593px;width:108px;height:21px;background:#2468e5;border-radius:0 0 2px 2px"></div>
<svg class="abs" style="left:749px;top:598px" width="12" height="10" viewBox="0 0 12 10"><path d="M1.3,2L6,6.8L10.7,2" fill="none" stroke="#fff" stroke-width="2.5"/></svg>
<div class="abs" style="left:768.6px;top:593.5px;font-size:12px;line-height:18px;color:#fff;font-weight:bold;white-space:nowrap">收起多维分析</div>

<div class="abs" style="left:38px;top:640px;width:1px;height:403px;background:#dcdcdc"></div>
<div class="step" style="top:619px">1</div>
<div class="stl" style="top:623px">数据过滤</div>
<div class="inp" style="left:127px;top:621px;width:1436px;height:29px;border-color:#e6e6e6"></div>
<svg class="abs" style="left:133px;top:627px" width="15" height="17" viewBox="0 0 15 17"><path d="M1,1.2H14L8.9,8V13.4L6.1,15.6V8Z" fill="none" stroke="#4a4a4a" stroke-width="1.2" stroke-linejoin="round"/></svg>
<div class="abs" style="left:154px;top:626px;font-size:14px;line-height:20px;color:#d3d6dd">过滤规则</div>
<div class="abs" style="left:1506px;top:621px;width:57.5px;height:29px;background:#d0dffa;color:#2468e5;font-weight:bold;font-size:14px;line-height:29px;text-align:center">过滤</div>

<div class="step" style="top:661px">2</div>
<div class="stl" style="top:665px">维度分析</div>

<!-- dimension cards -->
<div class="dh" style="left:61px;top:689px;width:303px;height:27.6px;padding-left:7.5px;font-size:14px">源IP</div>
<svg class="abs" style="left:99px;top:696px" width="9" height="13" viewBox="0 0 9 13"><path d="M1.5,1L7,6.5L1.5,12" fill="none" stroke="#2468e5" stroke-width="1.4"/></svg>
<div class="dn" style="left:251px;top:689px">18463394</div>
<svg class="abs tr1" style="left:343px;top:696px" width="12" height="13" viewBox="0 0 12 13"><g fill="none" stroke="#f26b6b" stroke-width="1.1"><path d="M.8,2.9H11.2M4,2.9V1H8V2.9"/><path d="M2,2.9V11.3a.8,.8 0 0 0 .8,.8H9.2a.8,.8 0 0 0 .8,-.8V2.9"/><path d="M4.6,5.2V9.8M7.4,5.2V9.8"/></g></svg>
<div class="abs" style="left:61px;top:716.6px;width:303px;height:26px;background:#f5f8fd"></div>
<div class="di" style="left:69px;top:722px">172.254.0.145</div>

<div class="abs" style="left:63px;top:759px;width:299px;height:121px;border:1px solid #2468e5;box-shadow:0 0 0 1.5px rgba(36,104,229,.2);background:#f5f8fd"></div>
<div class="dh" style="left:64px;top:760px;width:297px;height:28px;padding-left:7.5px;line-height:27px;font-size:14px">源端口</div>
<svg class="abs" style="left:116px;top:767px" width="9" height="13" viewBox="0 0 9 13"><path d="M1.5,1L7,6.5L1.5,12" fill="none" stroke="#2468e5" stroke-width="1.4"/></svg>
<div class="dn" style="left:264px;top:760px">737770</div>
<svg class="abs" style="left:340px;top:767px" width="12" height="13" viewBox="0 0 12 13"><g fill="none" stroke="#f26b6b" stroke-width="1.1"><path d="M.8,2.9H11.2M4,2.9V1H8V2.9"/><path d="M2,2.9V11.3a.8,.8 0 0 0 .8,.8H9.2a.8,.8 0 0 0 .8,-.8V2.9"/><path d="M4.6,5.2V9.8M7.4,5.2V9.8"/></g></svg>
<div class="di" style="left:72px;top:793px">45869</div>
<div class="di" style="left:72px;top:809.3px">41221</div>
<div class="di" style="left:72px;top:825.6px">44114</div>
<div class="di" style="left:72px;top:841.9px">42324</div>
<div class="di" style="left:72px;top:858.2px">5205</div>
<svg class="abs" style="left:338px;top:886px" width="19" height="19" viewBox="0 0 19 19"><circle cx="9.5" cy="9.5" r="9.2" fill="#3d4251"/><path d="M9.5,4.6V14.4M4.6,9.5H14.4" stroke="#fff" stroke-width="2.6"/></svg>

<!-- table header -->
<div class="abs" style="left:367px;top:689px;width:1199px;height:23.5px;background:#d0dffa"></div>
<div class="th" style="left:391px">源端口</div>
<div class="th" style="left:587px">交易量</div>
<div class="th" style="left:782px">交易占比</div>
<div class="th" style="left:977px">成功率</div>
<div class="th" style="left:1173px">响应率</div>
<div class="th" style="left:1369px">响应时间</div>
<div class="cb" style="left:373px;top:695px"></div>
<svg class="abs" style="left:367px;top:689px" width="1200" height="23" viewBox="0 0 1200 23">
  <defs>
    <g id="srt"><path d="M0,3.7L3.3,0L6.6,3.7Z"/><path d="M0,9L3.3,12.7L6.6,9Z"/></g>
    <path id="chv" d="M0,0L4.6,4.6L9.2,0" fill="none" stroke="#4d5160" stroke-width="2.1"/>
  </defs>
  <g fill="#fff" fill-opacity=".85"><rect x="23.7" y="1" width="1" height="21.5"/><rect x="219" y="1" width="1" height="21.5"/><rect x="414.2" y="1" width="1" height="21.5"/><rect x="609.3" y="1" width="1" height="21.5"/><rect x="804.8" y="1" width="1" height="21.5"/><rect x="1000.8" y="1" width="1" height="21.5"/></g>
  <g fill="#6b7080">
    <use href="#srt" x="73.5" y="4.1"/><use href="#srt" x="268.7" y="4.1"/><use href="#srt" x="475.7" y="4.1"/><use href="#srt" x="659.2" y="4.1"/><use href="#srt" x="854.7" y="4.1"/><use href="#srt" x="1062.7" y="4.1"/>
  </g>
  <path d="M268.7,13.1L272,16.8L275.3,13.1Z" fill="#2468e5"/>
  <use href="#chv" x="203" y="8.5"/><use href="#chv" x="398" y="8.5"/><use href="#chv" x="593" y="8.5"/><use href="#chv" x="788.5" y="8.5"/><use href="#chv" x="984.5" y="8.5"/><use href="#chv" x="1180.5" y="8.5"/>
</svg>
<div class="tr" style="top:713px"><div class="cb on"><svg style="position:absolute;left:0;top:0" width="12" height="12" viewBox="0 0 12 12"><path d="M2,5.9L5.1,8.8L10.1,3" fill="none" stroke="#fff" stroke-width="1.9"/></svg></div><span class="c1">45869</span><span class="c2">202</span><span class="c3">0.02%</span><span class="c4">0%</span><span class="c5">100%</span><span class="c6">7.32ms</span></div>
<div class="tr odd" style="top:735px"><div class="cb on"><svg style="position:absolute;left:0;top:0" width="12" height="12" viewBox="0 0 12 12"><path d="M2,5.9L5.1,8.8L10.1,3" fill="none" stroke="#fff" stroke-width="1.9"/></svg></div><span class="c1">41221</span><span class="c2">200</span><span class="c3">0.02%</span><span class="c4">0%</span><span class="c5">100%</span><span class="c6">16.26ms</span></div>
<div class="tr" style="top:757px"><div class="cb on"><svg style="position:absolute;left:0;top:0" width="12" height="12" viewBox="0 0 12 12"><path d="M2,5.9L5.1,8.8L10.1,3" fill="none" stroke="#fff" stroke-width="1.9"/></svg></div><span class="c1">42324</span><span class="c2">200</span><span class="c3">0.02%</span><span class="c4">0%</span><span class="c5">99.5%</span><span class="c6">45.61ms</span></div>
<div class="tr odd" style="top:779px"><div class="cb on"><svg style="position:absolute;left:0;top:0" width="12" height="12" viewBox="0 0 12 12"><path d="M2,5.9L5.1,8.8L10.1,3" fill="none" stroke="#fff" stroke-width="1.9"/></svg></div><span class="c1">44114</span><span class="c2">199</span><span class="c3">0.02%</span><span class="c4">0%</span><span class="c5">100%</span><span class="c6">22.38ms</span></div>
<div class="tr" style="top:801px"><div class="cb on"><svg style="position:absolute;left:0;top:0" width="12" height="12" viewBox="0 0 12 12"><path d="M2,5.9L5.1,8.8L10.1,3" fill="none" stroke="#fff" stroke-width="1.9"/></svg></div><span class="c1">5205</span><span class="c2">198</span><span class="c3">0.02%</span><span class="c4">0%</span><span class="c5">99.49%</span><span class="c6">24.11ms</span></div>
<div class="tr odd" style="top:823px"><div class="cb"></div><span class="c1">46870</span><span class="c2">198</span><span class="c3">0.02%</span><span class="c4">0%</span><span class="c5">99.49%</span><span class="c6">30.69ms</span></div>
<div class="tr" style="top:845px"><div class="cb"></div><span class="c1">54217</span><span class="c2">198</span><span class="c3">0.02%</span><span class="c4">0%</span><span class="c5">99.49%</span><span class="c6">23.05ms</span></div>
<div class="tr odd" style="top:867px"><div class="cb"></div><span class="c1">45996</span><span class="c2">196</span><span class="c3">0.02%</span><span class="c4">0%</span><span class="c5">100%</span><span class="c6">60.52ms</span></div>
<div class="tr" style="top:889px"><div class="cb"></div><span class="c1">57548</span><span class="c2">196</span><span class="c3">0.02%</span><span class="c4">0%</span><span class="c5">98.97%</span><span class="c6">106.55ms</span></div>
<div class="tr odd" style="top:911px"><div class="cb"></div><span class="c1">44640</span><span class="c2">195</span><span class="c3">0.02%</span><span class="c4">0%</span><span class="c5">100%</span><span class="c6">20.69ms</span></div>

<!-- pagination -->
<div class="abs" style="left:367px;top:1017px;width:1199px;height:26px;border-top:1px solid #ddd;border-bottom:1px solid #ddd"></div>
<svg class="abs" style="left:372px;top:1021px" width="20" height="20" viewBox="0 0 20 20"><circle cx="10" cy="10" r="9.3" fill="#2468e5"/><path d="M15,10H6M10,5.3L5.4,10L10,14.7" fill="none" stroke="#fff" stroke-width="2.4" stroke-linejoin="miter"/></svg>
<div class="inp" style="left:1147px;top:1021px;width:45px;height:19px;border-color:#d9d9d9"></div>
<div class="pg" style="left:1159px">10</div>
<svg class="abs" style="left:1177px;top:1027px" width="9" height="6" viewBox="0 0 9 6"><path d="M0,5.5L4.5,.5L9,5.5Z" fill="#444"/></svg>
<div class="pg" style="left:1197px;word-spacing:1.6px">条 / 页</div>
<div class="pg" style="left:1245px">共</div>
<div class="pg" style="left:1263px;color:#4a86e8">23317</div>
<div class="pg" style="left:1303px">条记录</div>
<svg class="abs" style="left:1356px;top:1025px" width="8" height="12" viewBox="0 0 8 12"><path d="M6.5,1L1.5,6L6.5,11" fill="none" stroke="#d0d0d0" stroke-width="1.3"/></svg>
<div class="pg" style="left:1377px;color:#4a86e8">1</div>
<div class="pg" style="left:1396px">2</div>
<div class="pg" style="left:1415px">3</div>
<div class="pg" style="left:1434.5px">4</div>
<div class="pg" style="left:1453.5px">5</div>
<div class="pg" style="left:1472.5px">6</div>
<div class="pg" style="left:1490px">...</div>
<div class="pg" style="left:1506.5px">1000</div>
<svg class="abs" style="left:1540px;top:1025px" width="8" height="12" viewBox="0 0 8 12"><path d="M1.5,1L6.5,6L1.5,11" fill="none" stroke="#444" stroke-width="1.3"/></svg>
<div class="abs" style="left:1554px;top:1020px;width:12px;height:12px;border-radius:6px;background:#4a86e8;color:#fff;font-size:10px;font-weight:bold;line-height:12px;text-align:center">?</div>

<div class="step" style="top:1046px">3</div>
<div class="stl" style="top:1050px">结果使用</div>
<svg class="abs" style="left:130px;top:1051px" width="88" height="20" viewBox="0 0 88 20">
  <g fill="#2468e5"><circle cx="10" cy="10" r="9.2"/><circle cx="43.3" cy="10" r="9.2"/><circle cx="77" cy="10" r="9.2"/></g>
  <g fill="none" stroke="#fff" stroke-width="1.6"><path d="M10,4.2V12.4M6.4,9.2L10,12.8L13.6,9.2M5.6,15.2H14.4"/><path d="M38.5,6.8H48.1M38.5,10H48.1M38.5,13.2H48.1"/></g>
  <g fill="none" stroke="#fff" stroke-width="1.3"><path d="M74,6.6V5.2H82V12.6H80.6"/><rect x="72.2" y="7.2" width="8" height="7.4" rx=".6"/><path d="M74,10H78.4M74,12.2H78.4"/></g>
</svg>

<!-- ================= RIGHT PANEL ================= -->
<style>
#rp{position:absolute;left:1589.5px;top:106px;width:331px;height:974px;background:#fff;box-shadow:-1px 0 4px rgba(0,0,0,.09)}
.tab{position:absolute;top:118px;font-size:14px;line-height:22px;color:#444;white-space:nowrap;width:100px;text-align:center}
.rl{position:absolute;left:1606px;font-size:14px;line-height:20px;color:#5d6270;white-space:nowrap}
.rv{position:absolute;right:39px;font-size:14px;line-height:20px;color:#3f4452;white-space:nowrap;text-align:right}
.sep{position:absolute;left:1606px;width:314px;height:1px;background:#e8e8e8}
.box{position:absolute;left:1606px;background:#fff;border:1px solid #e8e8e8;border-radius:2px}
.bt{position:absolute;left:1614px;font-size:14px;line-height:20px;color:#5d6270;white-space:nowrap}
</style>
<div id="rp"></div>
<div class="abs" style="left:1589.5px;top:106px;width:331px;height:49px;background:#f5f8fd;border-bottom:1px solid #d4dcf0"></div>
<div class="tab" style="left:1618px;color:#2468e5">数据</div>
<div class="tab" style="left:1691px">样式</div>
<div class="tab" style="left:1778px">基本信息</div>
<div class="abs" style="left:1632px;top:152px;width:73px;height:3px;background:#2468e5"></div>

<div class="rl" style="top:172px;color:#2f3340">时间粒度</div>
<div class="rv" style="top:172px;right:38px">1分钟</div>
<div class="abs" style="left:1590px;top:209px;width:330px;height:1px;background:#e8e8e8"></div>


<!-- card 1 -->
<div class="box" style="top:226px;width:210px;height:32px"></div>
<div class="bt" style="top:232px">交易量</div>
<div class="box" style="top:266px;width:298px;height:98px"></div>
<div class="abs" style="left:1629px;top:270px;font-size:13px;line-height:20px;color:#d6dae2">过滤规则</div>
<div class="rl" style="top:377px">显示指标</div><div class="rv" style="top:377px">交易量</div>
<div class="rl" style="top:409px">计算方式</div><div class="rv" style="top:408px;right:38px">总数</div>
<div class="sep" style="top:446px"></div>
<!-- card 2 -->
<div class="box" style="top:463px;width:210px;height:32px"></div>
<div class="bt" style="top:469px">交易响应率</div>
<div class="box" style="top:503px;width:298px;height:98px"></div>
<div class="abs" style="left:1629px;top:507px;font-size:13px;line-height:20px;color:#d6dae2">过滤规则</div>
<div class="rl" style="top:614px">显示指标</div><div class="rv" style="top:614px">交易响应率</div>
<div class="rl" style="top:646px">计算方式</div><div class="rv" style="top:645px;color:#c0c4cc;right:38px">总数</div>
<div class="sep" style="top:683px"></div>
<!-- card 3 -->
<div class="box" style="top:700px;width:210px;height:32px"></div>
<div class="bt" style="top:706px">交易量1</div>
<div class="box" style="top:740px;width:298px;height:98px"></div>
<div class="abs" style="left:1629px;top:743px;font-size:14px;line-height:20px;color:#444">_src_ip:172.254.0.145</div>
<div class="rl" style="top:851px">显示指标</div><div class="rv" style="top:851px">交易量</div>
<div class="rl" style="top:882px">计算方式</div><div class="rv" style="top:881px;right:38px">总数</div>
<div class="sep" style="top:919px"></div>

<div class="abs" style="left:1850px;top:936px;width:70px;height:28px;background:#5a91ea;border-radius:14px 0 0 14px"></div>
<svg class="abs" style="left:1857.5px;top:942.6px" width="15" height="15" viewBox="0 0 15 15"><path d="M7.5,.5V14.5M.5,7.5H14.5" stroke="#fff" stroke-width="2"/></svg>
<div class="abs" style="left:1876px;top:940.6px;font-size:14px;line-height:20px;color:#fff;font-weight:bold">折线</div>
<div class="abs" style="left:1590px;top:980px;width:330px;height:1px;background:#e8e8e8"></div>
<svg class="abs" style="left:1590px;top:106px" width="330" height="974" viewBox="0 0 330 974">
  <defs>
    <path id="car" d="M0,0H9L4.5,4.6Z"/>
    <g id="dots"><rect x="-1.2" y="-1.2" width="2.5" height="2.5" rx=".6"/><rect x="-1.2" y="4.4" width="2.5" height="2.5" rx=".6"/><rect x="-1.2" y="10" width="2.5" height="2.5" rx=".6"/></g>
    <path id="fun" d="M.8,.8H13.2L8.4,7.3V12.6L5.6,14.8V7.3Z" fill="none" stroke="#444" stroke-width="1.2" stroke-linejoin="round"/>
  </defs>
  <g fill="#444">
    <use href="#car" x="298" y="73.5"/>
    <use href="#car" x="298" y="278.5"/><use href="#car" x="298" y="310"/>
    <use href="#car" x="298" y="515.5"/><use href="#car" x="298" y="547" fill="#bfbfbf"/>
    <use href="#car" x="298" y="752.5"/><use href="#car" x="298" y="783.5"/>
  </g>
  <g fill="#333"><use href="#dots" x="304" y="130.6"/><use href="#dots" x="304" y="367.6"/><use href="#dots" x="304" y="604.6"/></g>
  <use href="#fun" x="21.5" y="166.5"/><use href="#fun" x="21.5" y="403.5"/><use href="#fun" x="21.5" y="640.5"/>
</svg>

</body>
</html>
